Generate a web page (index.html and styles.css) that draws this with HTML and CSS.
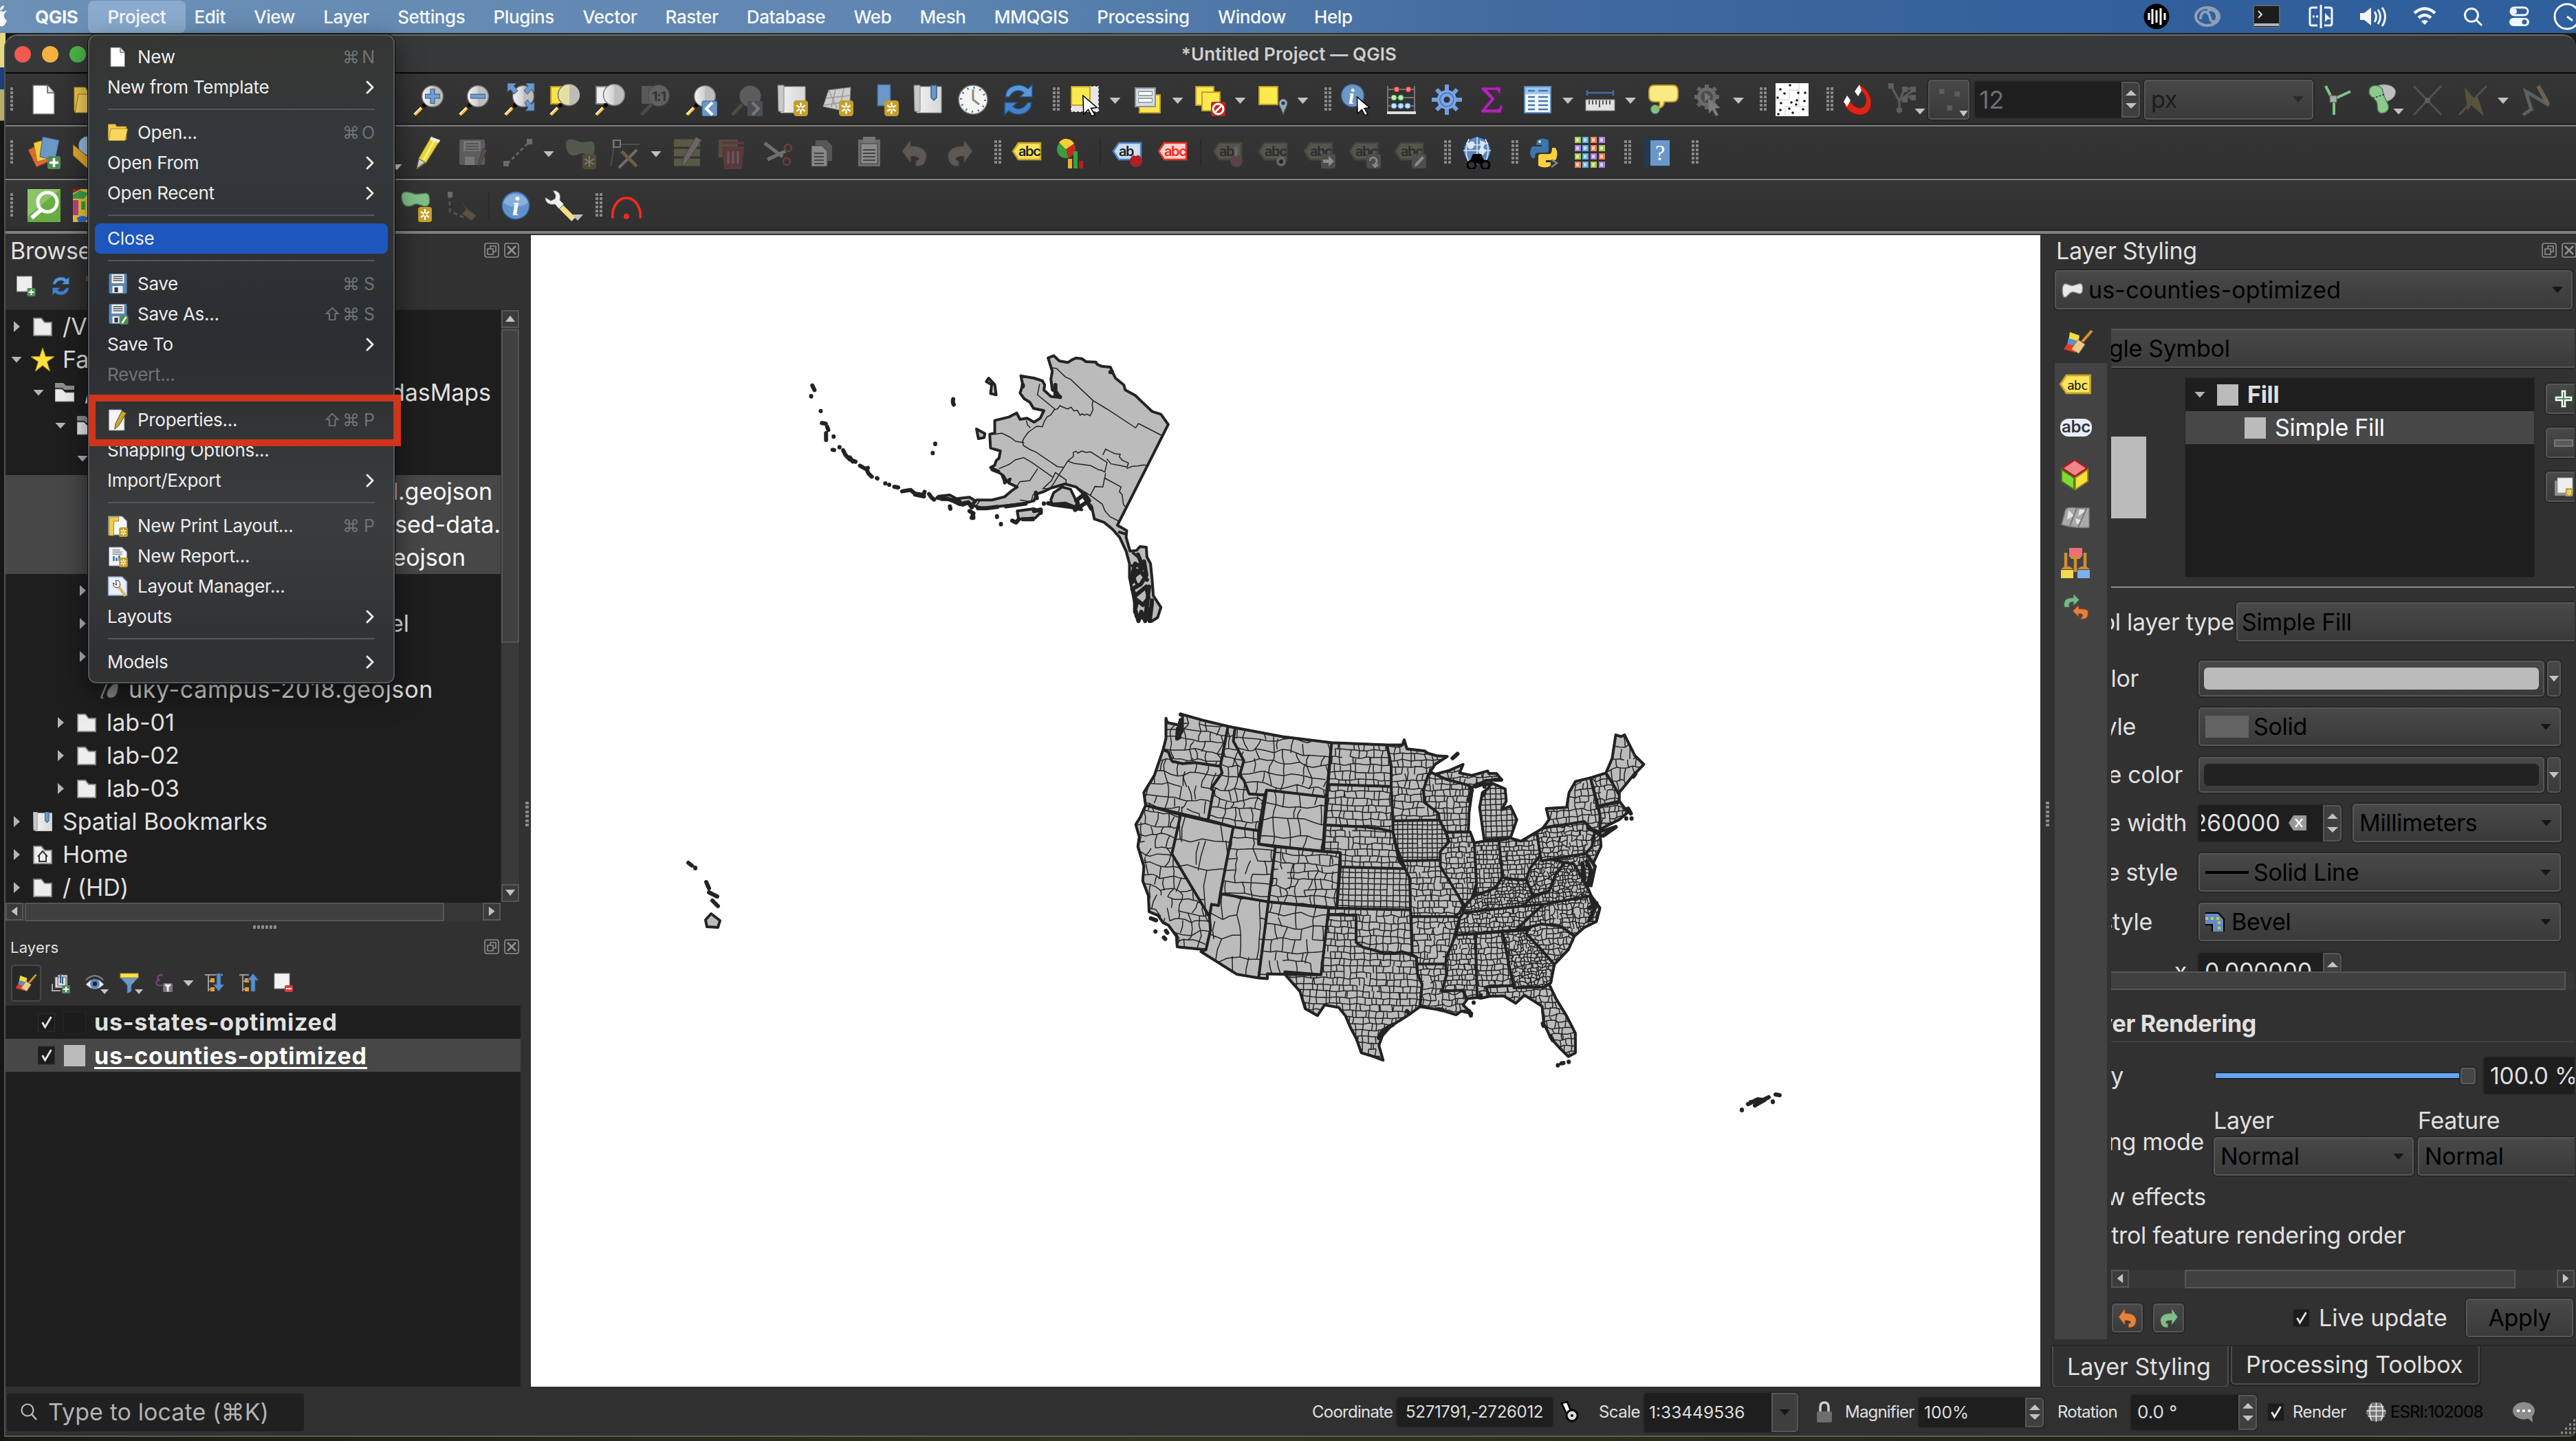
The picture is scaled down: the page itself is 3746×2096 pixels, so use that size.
FILE: index.html
```html
<!DOCTYPE html>
<html lang="en">
<head>
<meta charset="utf-8">
<title>*Untitled Project — QGIS</title>
<link rel="stylesheet" href="styles.css">
</head>
<body>
<svg class="defs" aria-hidden="true">
<defs>
<linearGradient id="gLens" x1="0" x2="1"><stop offset="0" stop-color="#f4f4f4"/><stop offset=".5" stop-color="#cfcfcf"/><stop offset=".5" stop-color="#bdbdbd"/></linearGradient>
<linearGradient id="gPage" x1="0" x2="1"><stop offset="0" stop-color="#f2f2f2"/><stop offset="1" stop-color="#d6d6d6"/></linearGradient>
<symbol id="star" viewBox="0 0 20 22"><rect x="0" y="0" width="20" height="22" rx="4" fill="#c4a02b"/><path d="M10 3v16M4 7l12 8M16 7L4 15" stroke="#fff" stroke-width="2.2"/><circle cx="10" cy="11" r="2" fill="#c4a02b"/></symbol>
<symbol id="handleMag" viewBox="0 0 48 48"><path d="M19 31L4 46" stroke="#3a2c12" stroke-width="6"/><path d="M14 36L4 46" stroke="#fbc64a" stroke-width="4.5"/><path d="M13 35L3 45" stroke="#fff" stroke-width="1.5"/><circle cx="18" cy="32" r="3" fill="#000"/></symbol>
<symbol id="mag" viewBox="0 0 48 48"><use href="#handleMag"/><circle cx="30" cy="19" r="15.5" fill="url(#gLens)" stroke="#6e6e6e" stroke-width="1.5"/></symbol>
<symbol id="zin" viewBox="0 0 48 48"><use href="#mag"/><path d="M30 8v22M19 19h22" stroke="#3d6288" stroke-width="7"/><path d="M30 9v20M20 19h20" stroke="#6f9fd4" stroke-width="4.5"/></symbol>
<symbol id="zout" viewBox="0 0 48 48"><use href="#mag"/><path d="M19 19h22" stroke="#3d6288" stroke-width="7"/><path d="M20 19h20" stroke="#6f9fd4" stroke-width="4.5"/></symbol>
<symbol id="zfull" viewBox="0 0 48 48"><use href="#mag"/><path d="M7 0h13l-4 4 6 7-5 5-6-7-4 4zM46 0v13l-4-4-6 7-5-5 6-7-4-4zM46 40H33l4-4-5-7 4-5 6 7 4-4z" fill="#6b98c9" stroke="#355f8c"/></symbol>
<symbol id="zsel" viewBox="0 0 48 48"><rect x="4" y="5" width="28" height="25" fill="#f9e14a" stroke="#b99a28" stroke-width="2"/><use href="#handleMag"/><circle cx="30" cy="17" r="15.5" fill="#e6dfa4" stroke="#777" stroke-width="1.5"/><path d="M31 2a15 15 0 0 1 0 30z" fill="#bdbdb6"/></symbol>
<symbol id="zlay" viewBox="0 0 48 48"><rect x="4" y="5" width="28" height="25" fill="#eee" stroke="#888" stroke-width="2"/><use href="#handleMag"/><circle cx="30" cy="17" r="15.5" fill="url(#gLens)" stroke="#777" stroke-width="1.5"/></symbol>
<symbol id="znat" viewBox="0 0 48 48"><rect x="4" y="4" width="22" height="26" fill="#585858"/><path d="M18 31L4 46" stroke="#4e4b45" stroke-width="5"/><circle cx="29" cy="18" r="15.5" fill="#606060" stroke="#484848"/><text x="29" y="26" class="g11">1:1</text></symbol>
<symbol id="zlast" viewBox="0 0 48 48"><use href="#mag"/><rect x="26" y="26" width="22" height="22" rx="2" fill="#6b98c9" stroke="#355f8c"/><path d="M41 28l-9 9 9 9" fill="none" stroke="#fff" stroke-width="4"/></symbol>
<symbol id="znext" viewBox="0 0 48 48"><path d="M18 31L4 46" stroke="#4e4b45" stroke-width="5"/><circle cx="30" cy="19" r="15.5" fill="#5c5c5c"/><rect x="26" y="26" width="22" height="22" rx="2" fill="#4a4f54"/><path d="M33 28l9 9-9 9" fill="none" stroke="#777" stroke-width="4"/></symbol>
<symbol id="map" viewBox="0 0 48 48"><path d="M10 5h34v38H8z" fill="url(#gPage)" stroke="#999"/><path d="M4 3h9v38H5z" fill="#c9c9c9" stroke="#888"/></symbol>
<symbol id="mapnew" viewBox="0 0 48 48"><use href="#map"/><use href="#star" x="27" y="25" width="21" height="23"/></symbol>
<symbol id="mesh" viewBox="0 0 48 48"><path d="M12 10l32-4-2 36-38-8z" fill="#cdcdcd" stroke="#888"/><path d="M8 22l34-4M6 32l36-6M22 9l-6 26M34 8l-6 30M12 10l12 26" stroke="#999" stroke-width="1.5" fill="none"/></symbol>
<symbol id="meshnew" viewBox="0 0 48 48"><use href="#mesh"/><use href="#star" x="27" y="25" width="21" height="23"/></symbol>
<symbol id="bmnew" viewBox="0 0 48 48"><path d="M17 2h19v40l-9-9-10 0z" fill="#6b98c9" stroke="#355f8c" stroke-width="1.5"/><use href="#star" x="27" y="25" width="21" height="23"/></symbol>
<symbol id="bm" viewBox="0 0 48 48"><use href="#map"/><path d="M29 3h8v18l-4 4-4-4z" fill="#6b98c9" stroke="#355f8c" stroke-width="1.5"/></symbol>
<symbol id="clock" viewBox="0 0 48 48"><circle cx="24" cy="24" r="21" fill="#f4f4f2" stroke="#777" stroke-width="1.5"/><circle cx="24" cy="24" r="17.5" fill="none" stroke="#3d6ea8" stroke-width="3" stroke-dasharray="2 7.16"/><path d="M24 9v15l9 7" fill="none" stroke="#8b8b82" stroke-width="3"/></symbol>
<symbol id="refresh" viewBox="0 0 48 48"><path d="M5 20C6 2 28-2 38 8l6-6v18H26l6-6c-7-6-17-3-21 6z" fill="#5b97d9" stroke="#24508a" stroke-width="1.5"/><path d="M43 28c-1 18-23 22-33 12l-6 6V28h18l-6 6c7 6 17 3 21-6z" fill="#4582c8" stroke="#24508a" stroke-width="1.5"/></symbol>
<symbol id="cursor" viewBox="0 0 24 32"><path d="M1 1l21 18-9 1 6 10-5 2-5-10-7 7z" fill="#fff" stroke="#000" stroke-width="1.6"/></symbol>
<symbol id="select" viewBox="0 0 48 48"><rect x="3" y="4" width="41" height="38" fill="#e6e6e6"/><rect x="3" y="4" width="41" height="38" fill="none" stroke="#222" stroke-width="1.5" stroke-dasharray="3 3"/><rect x="4" y="5" width="27" height="27" fill="#fce94f" stroke="#c4a02b" stroke-width="2"/><use href="#cursor" x="19" y="17" width="25" height="31"/></symbol>
<symbol id="selform" viewBox="0 0 48 48"><rect x="12" y="17" width="30" height="26" fill="#fce94f" stroke="#c4a02b" stroke-width="2"/><rect x="6" y="7" width="29" height="27" fill="#d5dbe2" stroke="#8a939c" stroke-width="2"/><path d="M10 15h21M10 25h21" stroke="#8a939c" stroke-width="7"/><path d="M11 15h19M11 25h19" stroke="#fff" stroke-width="4"/></symbol>
<symbol id="desel" viewBox="0 0 48 48"><path d="M3 5h26v8h9v27H12v-8H3z" fill="#fce94f" stroke="#c4a02b" stroke-width="2"/><path d="M12 32V13h17" fill="none" stroke="#c4a02b" stroke-width="2"/><rect x="25" y="27" width="21" height="21" rx="3" fill="#c0271f"/><circle cx="35.500" cy="37.500" r="7.500" fill="none" stroke="#fff" stroke-width="3"/><path d="M30 43l11-11" stroke="#fff" stroke-width="3"/></symbol>
<symbol id="selloc" viewBox="0 0 48 48"><rect x="4" y="5" width="27" height="26" fill="#fce94f" stroke="#c4a02b" stroke-width="2"/><path d="M39 46c-2-9-6-12-6-17a6 6 0 0 1 12 0c0 5-4 8-6 17z" fill="#8fa9b8" stroke="#4b6472"/><circle cx="39" cy="29" r="2.600" fill="#333"/></symbol>
<symbol id="info" viewBox="0 0 48 48"><circle cx="24" cy="24" r="20" fill="#5f92cd" stroke="#2e5688" stroke-width="1.500"/><path d="M6 20a19 19 0 0 1 36 0c-12 8-24 8-36 0z" fill="#a5c3e5" opacity=".6"/><text x="24" y="38" class="gi">i</text></symbol>
<symbol id="ident" viewBox="0 0 48 48"><circle cx="19" cy="18" r="16.500" fill="#6b98c9" stroke="#355f8c" stroke-width="1.500"/><text x="17" y="30" class="gi2">i</text><use href="#cursor" x="23" y="19" width="24" height="28"/></symbol>
<symbol id="abacus" viewBox="0 0 48 48"><path d="M4 4v40M43 4v40M4 9h39M4 21h39M4 33h39" stroke="#777" stroke-width="2" fill="none"/><path d="M3 43h42" stroke="#ddd" stroke-width="4"/><g fill="#f08080" stroke="#b02020"><circle cx="17" cy="9" r="4"/><circle cx="34" cy="9" r="4"/></g><g fill="#b6f0b0" stroke="#4a9a4a"><circle cx="13" cy="21" r="4"/><circle cx="23" cy="21" r="4"/></g><g fill="#bfe3fb" stroke="#4a88b8"><circle cx="13" cy="33" r="4"/><circle cx="23" cy="33" r="4"/><circle cx="33" cy="33" r="4"/></g></symbol>
<symbol id="gear" viewBox="0 0 48 48"><g stroke="#6f9fe0" stroke-width="6"><path d="M24 2v44M2 24h44M9 9l30 30M39 9L9 39"/></g><circle cx="24" cy="24" r="14" fill="#7aa7e4"/><circle cx="24" cy="24" r="10" fill="none" stroke="#4f7fc4" stroke-width="2"/><circle cx="24" cy="24" r="4.500" fill="#333"/></symbol>
<symbol id="sigma" viewBox="0 0 48 48"><path d="M8 6h28v9h-3c0-4-2-5-6-5H17l11 13-13 15h14c5 0 6-2 7-6h3l-2 11H8v-3l14-17L8 9z" fill="#ae28b0" stroke="#701872"/></symbol>
<symbol id="table" viewBox="0 0 48 48"><rect x="5" y="5" width="38" height="38" fill="#f2f6fa" stroke="#5c8fc4" stroke-width="2"/><rect x="6" y="6" width="36" height="10" fill="#9cc6ee"/><path d="M10 11h10M25 11h14M10 20h10M25 20h14M10 26h10M25 26h14M10 32h10M25 32h14M10 38h10M25 38h14" stroke="#4479b0" stroke-width="2.500"/></symbol>
<symbol id="ruler" viewBox="0 0 48 48"><path d="M5 14h38M5 10v8M43 10v8" stroke="#3e6ea3" stroke-width="2.500"/><rect x="3" y="24" width="42" height="16" fill="#e2e2e2" stroke="#888"/><path d="M8 25v6M13 25v6M18 25v6M23 25v10M28 25v6M33 25v6M38 25v6" stroke="#555" stroke-width="2"/></symbol>
<symbol id="tip" viewBox="0 0 48 48"><circle cx="13" cy="38" r="6.500" fill="#7fbf86" stroke="#4a7a50"/><path d="M12 3h26q8 0 8 8v8q0 8-8 8H26q0 8-9 10 4-4 2-10h-7q-8 0-8-8v-8q0-8 8-8z" fill="#f9ea85" stroke="#c4a02b" stroke-width="2"/></symbol>
<symbol id="geargrey" viewBox="0 0 48 48"><g stroke="#666" stroke-width="6"><path d="M22 2v36M4 20h36M9 7l26 26M35 7L9 33"/></g><circle cx="22" cy="20" r="14" fill="#6a6a6a"/><circle cx="22" cy="20" r="9" fill="#4a4d50"/><path d="M19 14l9 6-9 6z" fill="#777"/><path d="M24 22l18 14-8 1 5 9-4 2-5-9-5 5z" fill="#7c7c7c"/></symbol>
<symbol id="dots" viewBox="0 0 48 48"><rect width="48" height="48" fill="#fff"/><path d="M0 24h20M20 24V10h14V0M14 48V34h20V10M34 34h14" fill="none" stroke="#ccc"/><g fill="#111"><circle cx="7" cy="9" r="1.800"/><circle cx="21" cy="3" r="1.800"/><circle cx="13" cy="15" r="1.800"/><circle cx="33" cy="14" r="1.800"/><circle cx="43" cy="14" r="1.800"/><circle cx="3" cy="21" r="1.800"/><circle cx="8" cy="29" r="1.800"/><circle cx="31" cy="25" r="1.800"/><circle cx="23" cy="28" r="1.800"/><circle cx="30" cy="31" r="1.800"/><circle cx="42" cy="26" r="1.800"/><circle cx="7" cy="39" r="1.800"/><circle cx="4" cy="45" r="1.800"/><circle cx="20" cy="37" r="1.800"/><circle cx="25" cy="43" r="1.800"/><circle cx="40" cy="38" r="1.800"/></g></symbol>
<symbol id="magnet" viewBox="0 0 48 48"><path d="M24 8C40 16 38 36 27 36 20 36 15 30 10 24L4 32C10 42 20 47 29 46 48 44 48 14 27 3z" fill="#dc2418" stroke="#8a120a"/><path d="M26 2l3 9-5 8-5-7zM8 18l5 7-5 9-5-7z" fill="#fff"/></symbol>
<symbol id="vert" viewBox="0 0 48 48"><path d="M6 4l12 22 8-18M18 44V26l20-16M26 8h14M26 20h14" fill="none" stroke="#5a5a5a" stroke-width="3.500"/><g fill="#5e5e5e"><rect x="2" y="0" width="8" height="8"/><rect x="22" y="5" width="8" height="8"/><rect x="34" y="5" width="8" height="8"/><rect x="34" y="17" width="8" height="8"/><rect x="22" y="20" width="8" height="8"/><rect x="14" y="36" width="8" height="6"/></g></symbol>
<symbol id="topo" viewBox="0 0 48 48"><path d="M18 24L8 4M18 24L44 12M20 24v22" stroke="#7fc487" stroke-width="4"/><rect x="14" y="18" width="10" height="10" fill="#aaa" stroke="#555"/></symbol>
<symbol id="avoid" viewBox="0 0 48 48"><path d="M14 6C22-2 48 2 43 16c-2 8-10 9-14 12L16 18z" fill="#bfbfbf" stroke="#777"/><path d="M6 8c4-7 18-6 19 4 1 8 6 14 8 20 2 9-6 13-12 11-6-3-2-10-5-16C13 20 2 20 6 8z" fill="#8cc98d" stroke="#4d7f50" stroke-width="1.500"/><path d="M10 22l18-6" stroke="#333" stroke-width="1.500" stroke-dasharray="3 2"/></symbol>
<symbol id="cross" viewBox="0 0 48 48"><path d="M4 4l40 42M44 4L4 46" stroke="#505050" stroke-width="3"/><circle cx="24" cy="25" r="4" fill="#5e5e5e"/></symbol>
<symbol id="bolt" viewBox="0 0 48 48"><path d="M12 6l14 16 4-6 10 32-18-16-6 8z" fill="#5c5238"/><path d="M44 4L4 46" stroke="#505050" stroke-width="3"/></symbol>
<symbol id="trace" viewBox="0 0 48 48"><path d="M6 46l12-8L10 12l34 20" fill="none" stroke="#5b6062" stroke-width="5"/><path d="M28 4l14 26" stroke="#6d6055" stroke-width="6"/></symbol>
<symbol id="file" viewBox="0 0 48 48"><path d="M8 3h21l10 11v31H8z" fill="#fff" stroke="#6a6a6a" stroke-width="1.500"/><path d="M29 3v11h10" fill="#ddd" stroke="#555" stroke-width="1.500"/></symbol>
<symbol id="open" viewBox="0 0 48 48"><path d="M2 6h16l3 5h22v30H2z" fill="#f2c94c" stroke="#b8912d"/><path d="M8 16h38l-6 27H3z" fill="#f9d65c" stroke="#8f6f1c"/></symbol>
<symbol id="layers" viewBox="0 0 48 48"><path d="M1 20l18-9 12 26-18 8z" fill="#dd6a32" stroke="#8b3d17"/><path d="M9 10l20-6 5 28-20 5z" fill="#f5cd3c" stroke="#a07c14"/><path d="M22 1l24 5-6 29-22-5z" fill="#6b98c9" stroke="#355f8c"/><rect x="29" y="29" width="19" height="19" rx="3" fill="#4f8d56"/><path d="M38.500 32v13M32 38.500h13" stroke="#fff" stroke-width="3.500"/></symbol>
<symbol id="box" viewBox="0 0 48 48"><circle cx="22" cy="14" r="14" fill="#9fc1e6" stroke="#355f8c"/><path d="M0 12l22 18v18L0 28z" fill="#e8aa30" stroke="#6e4c0c"/></symbol>
<symbol id="pencil" viewBox="0 0 48 48"><path d="M29 1l13 5-20 32-14 10 3-16z" fill="#e9d33a" stroke="#7c6c12"/><path d="M35 4L18 35" stroke="#fff27c" stroke-width="3"/><path d="M29 1l13 5-2 4-13-5z" fill="#eee"/><path d="M8 47l3-14 9 5z" fill="#ccc" stroke="#555"/></symbol>
<symbol id="savegr" viewBox="0 0 48 48"><rect x="4" y="5" width="37" height="37" rx="3" fill="#5c5c5e"/><rect x="10" y="7" width="25" height="15" fill="#757575"/><path d="M13 11h19M13 15h19M13 19h19" stroke="#4b4b4b" stroke-width="1.500"/><rect x="12" y="30" width="14" height="12" fill="#777"/><path d="M44 20l-12 26 0-8 6-20z" fill="#5b4d47" stroke="#403a38"/></symbol>
<symbol id="line" viewBox="0 0 48 48"><path d="M8 40L40 8" stroke="#636363" stroke-width="3" stroke-dasharray="5 4"/><rect x="2" y="36" width="8" height="8" fill="#6a6a6a"/><rect x="36" y="4" width="8" height="8" fill="#6a6a6a"/></symbol>
<symbol id="polygr" viewBox="0 0 48 48"><path d="M3 12C2 2 14 4 22 8s20-6 22 4 0 16-6 16-8-6-16-2S4 30 3 12z" fill="#51594f"/><rect x="27" y="26" width="20" height="22" rx="4" fill="#524c36"/><path d="M37 29v16M30 33l14 8M44 33l-14 8" stroke="#777" stroke-width="2"/></symbol>
<symbol id="tools" viewBox="0 0 48 48"><path d="M8 8L2 44M14 12h30" stroke="#4d4d4d" stroke-width="2"/><rect x="6" y="6" width="10" height="10" fill="none" stroke="#777" stroke-width="2"/><path d="M14 46l26-26" stroke="#6c6c6c" stroke-width="4"/><path d="M18 22l22 22" stroke="#6b5f40" stroke-width="5"/></symbol>
<symbol id="fields" viewBox="0 0 48 48"><path d="M4 10h38M4 24h38M4 38h38" stroke="#5a5847" stroke-width="11"/><path d="M36 1l8 5-20 30-8 8 2-12z" fill="#6b6565" stroke="#444"/></symbol>
<symbol id="trash" viewBox="0 0 48 48"><rect x="3" y="5" width="28" height="26" fill="#514f3c"/><path d="M8 10h32M10 17h28l-3 29H13z" fill="#59393c" stroke="#59393c" stroke-width="4"/><path d="M17 22v18M24 22v18M31 22v18" stroke="#6c5a5a" stroke-width="3"/></symbol>
<symbol id="cut" viewBox="0 0 48 48"><path d="M4 10l26 20M8 34l26-12" stroke="#6f6f6f" stroke-width="5"/><circle cx="38" cy="17" r="5" fill="none" stroke="#69403f" stroke-width="2.500"/><circle cx="36" cy="37" r="5" fill="none" stroke="#69403f" stroke-width="2.500"/></symbol>
<symbol id="copy" viewBox="0 0 48 48"><path d="M12 6h16l8 8v22H12z" fill="#575757"/><path d="M6 14h15l8 8v22H6z" fill="#888" stroke="#444"/><path d="M10 25h14M10 30h14M10 35h14M10 40h14" stroke="#444" stroke-width="2"/></symbol>
<symbol id="paste" viewBox="0 0 48 48"><rect x="8" y="5" width="32" height="39" fill="#6c6c6c"/><rect x="15" y="1" width="18" height="9" fill="#777"/><rect x="12" y="11" width="24" height="29" fill="#8b8b8b" stroke="#444"/><path d="M15 20h18M15 25h18M15 30h18M15 35h18" stroke="#444" stroke-width="2"/></symbol>
<symbol id="undo" viewBox="0 0 48 48"><path d="M6 22L18 6v9c18-1 26 8 22 20-2 7-8 9-14 8v-7c6 0 8-8-8-7v9z" fill="var(--a)" stroke="var(--b)"/></symbol>
<symbol id="tag" viewBox="0 0 48 48"><path d="M3 22L11 10h32v24H11z" fill="var(--a)" stroke="var(--b)" stroke-width="2.500"/></symbol>
<symbol id="pie" viewBox="0 0 48 48"><circle cx="14" cy="19" r="13" fill="#39a03c"/><path d="M14 19L4 9a13 13 0 0 1 22 2z" fill="#f7cf35"/><path d="M14 19l12-8a13 13 0 0 1-9 20z" fill="#c22a25"/><rect x="17" y="33" width="6" height="14" fill="#f0b030"/><rect x="25" y="22" width="6" height="25" fill="#37a33a"/><rect x="33" y="36" width="6" height="11" fill="#b02020"/></symbol>
<symbol id="globe" viewBox="0 0 48 48"><circle cx="24" cy="21" r="20" fill="#5f87b8" stroke="#1c3a60" stroke-width="2"/><path d="M10 12c6-8 12-4 10 2s-8 6-10 2zM28 6l8 3-3 8 5 4-7 8-5-6 3-7z" fill="#d6e5f5"/><path d="M4 21h40M24 1v40M8 10q16 6 32 0M12 4q-8 17 0 34M36 4q8 17 0 34" fill="none" stroke="#dbe8f6" stroke-width="1.500"/><path d="M12 40l6-14h12l6 14z" fill="#000"/><circle cx="16" cy="42" r="6" fill="#333" stroke="#000" stroke-width="3"/><circle cx="36" cy="42" r="6" fill="#333" stroke="#000" stroke-width="3"/></symbol>
<symbol id="python" viewBox="0 0 48 48"><path d="M13 6q8-5 17 0v14q0 4-4 4H14q-4 0-4 8H6q-6-8 0-17h14v-2h-8z" fill="#3c76aa"/><path d="M33 43q-8 5-18 0V30q0-4 4-4h12q4 0 4-9h5q5 9 0 18H26v3h7z" fill="#fccf3c"/><circle cx="17" cy="8" r="1.800" fill="#fff"/><path d="M34 34l8 5-8 6" fill="none" stroke="#888" stroke-width="2.500"/></symbol>
<symbol id="grid9" viewBox="0 0 48 48"><path d="M2 1h9v9H2zM37 13h9v9h-9zM2 25h9v9H2zM25 37h9v9h-9z" fill="#a9c94a"/><path d="M13 1h9v9h-9zM13 13h9v9h-9zM13 25h9v9h-9zM13 37h9v9h-9z" fill="#5fb0ea"/><path d="M25 1h9v9h-9zM25 13h9v9h-9zM37 25h9v9h-9zM2 37h9v9H2z" fill="#ef8250"/><path d="M37 1h9v9h-9zM2 13h9v9H2zM25 25h9v9h-9zM37 37h9v9h-9z" fill="#a882e2"/><path fill="#fff" opacity=".6" d="M4 3h4v5H4zM15 3h4v5h-4zM27 3h4v5h-4zM39 3h4v5h-4zM4 15h4v5H4zM15 15h4v5h-4zM27 15h4v5h-4zM39 15h4v5h-4zM4 27h4v5H4zM15 27h4v5h-4zM27 27h4v5h-4zM39 27h4v5h-4zM4 39h4v5H4zM15 39h4v5h-4zM27 39h4v5h-4zM39 39h4v5h-4z"/></symbol>
<symbol id="help" viewBox="0 0 48 48"><rect x="4" y="3" width="39" height="42" fill="#24384e"/><rect x="14" y="6" width="28" height="37" fill="#6b98c9"/><text x="28" y="35" class="gq">?</text></symbol>
<symbol id="gsearch" viewBox="0 0 48 48"><rect width="48" height="48" fill="#68ad43"/><path d="M0 0h48L0 40z" fill="#8cc46a"/><circle cx="29" cy="19" r="14" fill="none" stroke="#fff" stroke-width="5"/><path d="M20 30L6 42" stroke="#fff" stroke-width="6"/></symbol>
<symbol id="osm" viewBox="0 0 48 48"><rect width="48" height="48" fill="#f0c840"/><path d="M0 8l10-6 12 4-6 8H0z" fill="#3da648"/><path d="M0 16h8v22H0z" fill="#c3457f"/><path d="M12 18h6v12h-6z" fill="#3da648"/><path d="M6 42q8-6 16 0l-4 6H8z" fill="#2f6fd0"/><path d="M0 0h12L0 6z" fill="#b02020"/></symbol>
<symbol id="poly" viewBox="0 0 48 48"><path d="M2 12C1 1 12 4 20 7s20-6 22 4-1 14-6 14-10-6-17-2S3 26 2 12z" fill="#84be88" stroke="#4e7f52" stroke-width="1.500"/><use href="#star" x="25" y="26" width="22" height="22"/></symbol>
<symbol id="brushgr" viewBox="0 0 48 48"><path d="M6 8v24l22 10" fill="none" stroke="#555" stroke-width="3" stroke-dasharray="6 4"/><rect x="3" y="4" width="7" height="8" fill="#6a6a6a"/><path d="M22 16l8 14-6 6 14 10 6-8-14-10z" fill="#5a4f42"/></symbol>
<symbol id="wrench" viewBox="0 0 48 48"><path d="M22 24l20 20" stroke="#f3dd85" stroke-width="8"/><path d="M12 2c10 0 12 8 10 14l6 6-7 7-6-7C8 24 0 20 1 12l8 5 6-3 1-5z" fill="#efefef" stroke="#666"/></symbol>
<symbol id="arc" viewBox="0 0 52 52"><path d="M4 46v-4a22 28 0 0 1 44 0v4" fill="none" stroke="#f42a1e" stroke-width="4"/><circle cx="26" cy="43" r="4.500" fill="#f42a1e"/></symbol>
<symbol id="folder" viewBox="0 0 28 28"><path d="M1 2h11l5 6h10v19H1z" fill="#ededed" stroke="#8c8c8c" stroke-width="1.800"/></symbol>
<symbol id="folder2" viewBox="0 0 28 28"><path d="M0 0h12l4 4h12v6H14l-4-3H0z" fill="#8d8f8c"/><path d="M0 9h10l5 5h13v13H0z" fill="#ededed" stroke="#8c8c8c"/></symbol>
<symbol id="home" viewBox="0 0 28 28"><use href="#folder"/><path d="M7 17l7-8 7 8M9 15v9h10v-9" fill="none" stroke="#333" stroke-width="2"/></symbol>
<symbol id="fav" viewBox="0 0 32 32"><path d="M16 0l4 12h12l-10 7 4 13-10-8-10 8 4-13L0 12h12z" fill="#fbe23f" stroke="#b99522"/></symbol>
<symbol id="leaf" viewBox="0 0 28 28"><path d="M3 26L12 4M2 5h5M3 26h3" stroke="#888" stroke-width="2.500"/><path d="M27 2c2 14-2 24-10 24S8 14 27 2z" fill="#8f8f8f" stroke="#555"/></symbol>
<symbol id="pageplus" viewBox="0 0 28 30"><rect x="1" y="1" width="22" height="22" fill="#eee" stroke="#999"/><rect x="16" y="18" width="12" height="12" rx="2" fill="#4f8d56"/><path d="M22 20v8M18 24h8" stroke="#fff" stroke-width="2"/></symbol>
<symbol id="pageminus" viewBox="0 0 28 30"><rect x="1" y="1" width="22" height="22" fill="#f3f3f3" stroke="#999"/><rect x="16" y="18" width="12" height="10" rx="2" fill="#d9393f"/><path d="M18 23h8" stroke="#fff" stroke-width="2"/></symbol>
<symbol id="float" viewBox="0 0 22 22"><rect x="1" y="1" width="20" height="20" rx="3" fill="none" stroke="#8f8f8f" stroke-width="1.600"/><path d="M5 9h8v8H5zM9 9V5h8v8h-4" fill="none" stroke="#8f8f8f" stroke-width="1.600"/></symbol>
<symbol id="close" viewBox="0 0 22 22"><rect x="1" y="1" width="20" height="20" rx="3" fill="none" stroke="#8f8f8f" stroke-width="1.600"/><path d="M5 5l12 12M17 5L5 17" stroke="#8f8f8f" stroke-width="2.600"/></symbol>
<symbol id="brush" viewBox="0 0 44 36"><path d="M10 3l14 5-4 22-14-4z" fill="#f3dd3d"/><path d="M8 12l14 4-1 8-15-4z" fill="#5c8fd0"/><path d="M6 20l16 4-4 9L1 28z" fill="#e03a2c"/><path d="M22 14l10 7-9 13-11-6z" fill="#ecc88e" stroke="#a8793a"/><path d="M28 17L42 1" stroke="#d6922f" stroke-width="4"/></symbol>
<symbol id="dup" viewBox="0 0 28 30"><path d="M2 16v10h12" fill="none" stroke="#aaa" stroke-width="2"/><path d="M6 6h16v16H6zM10 3h14v16H10z" fill="#ddd" stroke="#555"/><path d="M14 1v14M17 6v10" stroke="#355f8c" stroke-width="2"/><rect x="16" y="18" width="12" height="12" rx="2" fill="#4f8d56"/><path d="M22 20v8M18 24h8" stroke="#fff" stroke-width="2"/></symbol>
<symbol id="eye" viewBox="0 0 30 28"><path d="M1 16Q15 0 29 16 15 30 1 16z" fill="#eef2f6" stroke="#888"/><circle cx="15" cy="15" r="7.500" fill="#5b87bd"/><circle cx="15" cy="15" r="3.500" fill="#16283e"/><path d="M1 9Q15-4 28 9" fill="none" stroke="#888" stroke-width="2"/></symbol>
<symbol id="funnel" viewBox="0 0 28 30"><path d="M1 7h26L17 18v9l-6 3V18z" fill="#6b98c9" stroke="#355f8c"/><rect x="1" y="1" width="26" height="6" fill="#f9e14a" stroke="#c4a02b"/></symbol>
<symbol id="eps" viewBox="0 0 30 30"><path d="M14 3C6 0 2 8 9 10c-8 1-8 11 4 8" fill="none" stroke="#7a3f84" stroke-width="2.500"/><rect x="14" y="15" width="15" height="14" rx="2" fill="#777"/><path d="M16 17h11l-4 5v6h-3v-6z" fill="#eee"/></symbol>
<symbol id="expand" viewBox="0 0 28 28"><path d="M0 2h26M5 2v24M5 11h5M5 23h5" stroke="#9a9a9a" stroke-width="2" fill="none"/><rect x="8" y="7" width="6" height="6" fill="#f39a2b"/><rect x="8" y="20" width="6" height="6" fill="#f39a2b"/><path d="M17 0h6v16h5l-8 10-8-10h5z" fill="#5c8fc8" stroke="#2d5a90"/></symbol>
<symbol id="collapse" viewBox="0 0 28 28"><path d="M0 2h14M5 2v24M5 11h5M5 23h5" stroke="#9a9a9a" stroke-width="2" fill="none"/><rect x="8" y="7" width="6" height="6" fill="#f39a2b"/><rect x="8" y="20" width="6" height="6" fill="#f39a2b"/><path d="M17 26h6V10h5L20 0l-8 10h5z" fill="#5c8fc8" stroke="#2d5a90"/></symbol>
<symbol id="cube" viewBox="0 0 42 46"><path d="M21 2l18 12-18 12L3 14z" fill="#f08488" stroke="#a81c1c" stroke-width="2.500"/><path d="M2 16l18 12v17L2 33z" fill="#86d830" stroke="#3f7d1c" stroke-width="2"/><path d="M40 16L22 28v17l18-12z" fill="#f8e03c" stroke="#a0881c" stroke-width="2"/></symbol>
<symbol id="mesh2" viewBox="0 0 44 32"><path d="M8 4q4-4 16-2l18 0v28q-20 2-40-4z" fill="#a9a9a9" stroke="#7d7d7d" stroke-width="1.500"/><path d="M12 5l8 8-10 6zM28 4l10 1-12 9zM22 17l10 3-8 6z" fill="#e4e4e4"/><path d="M24 2l-10 26M38 3L26 30" stroke="#777" stroke-width="2"/></symbol>
<symbol id="brushes" viewBox="0 0 44 46"><path d="M8 8v22M36 8v22M22 14v22" stroke="#cf8f34" stroke-width="4.500"/><path d="M12 12h20l-4 5H16zM1 32l5-4h8l5 4zM25 32l5-4h8l5 4z" fill="#cf8f34"/><rect x="13" y="1" width="19" height="12" fill="#ee6e74"/><rect x="1" y="33" width="18" height="12" fill="#f4da4c"/><rect x="25" y="33" width="18" height="12" fill="#7db0ea"/></symbol>
<symbol id="hist" viewBox="0 0 40 40"><path d="M2 20C0 6 10 6 16 6V0l9 9-9 9v-6c-6 0-8 2-6 8z" fill="#7ab782" stroke="#42714a"/><path d="M38 26c2 14-8 12-12 12 6-4 6-8-2-8v5l-9-9 9-9v6c8 0 12 0 14 3z" fill="#e8803e" stroke="#9a4a18"/></symbol>
<symbol id="polyw" viewBox="0 0 34 24"><path d="M3 4c3-5 8 2 14 1s12-5 14-2 2 12-1 14-9-3-14-2-7 8-11 8S0 8 3 4z" fill="#e9e9e9" stroke="#8a8a8a" stroke-width="1.500"/></symbol>
<symbol id="bevel" viewBox="0 0 28 28"><path d="M0 0h19l8 9v19H10V18H0z" fill="#5f8ec6"/><path d="M0 1h19l8 9v18M0 18h10v10" fill="none" stroke="#000" stroke-width="2"/><path d="M0 9h20v19" fill="none" stroke="#d8c038" stroke-width="4" stroke-dasharray="4 4"/></symbol>
<symbol id="disk" viewBox="0 0 30 32"><rect x="2" y="1" width="26" height="29" rx="2" fill="#5c86b5"/><rect x="6" y="2" width="18" height="13" fill="#f2f2f2"/><path d="M8 5h14M8 8h14M8 11h14" stroke="#555" stroke-width="1.500"/><rect x="7" y="19" width="15" height="10" fill="#eee"/><rect x="10" y="21" width="5" height="7" fill="#333"/></symbol>
<symbol id="prop" viewBox="0 0 30 34"><path d="M1 1h19l5 6v26H1z" fill="#f4f4f4" stroke="#888"/><path d="M21 3l7 3-12 20-6 5 1-8z" fill="#c9a832" stroke="#4d4012"/></symbol>
<symbol id="layoutp" viewBox="0 0 30 32"><path d="M1 2h20l7 7v20H1z" fill="#f6f6f6" stroke="#8a97b8"/><path d="M2 3h14v6H9v21H2z" fill="#f0cc4c" stroke="#a98a20"/><use href="#star" x="16" y="18" width="14" height="14"/></symbol>
<symbol id="report" viewBox="0 0 30 32"><path d="M2 3h19l7 7v20H2z" fill="#f2f4fa" stroke="#8a97b8"/><path d="M7 7h11M7 10h14M7 13h14" stroke="#888" stroke-width="1.500"/><path d="M9 16v7M13 18v5M17 15v8" stroke="#3d6ea8" stroke-width="2.500"/><use href="#star" x="16" y="18" width="14" height="14"/></symbol>
<symbol id="layman" viewBox="0 0 30 32"><path d="M1 2h20l7 7v20H1z" fill="#e8eefa" stroke="#8aa0c8" stroke-width="1.500"/><path d="M16 16l10 14" stroke="#d8b95c" stroke-width="4"/><path d="M12 7q7 0 6 8l-3 3q-7 0-7-7l5 3z" fill="#fff" stroke="#333"/></symbol>
<symbol id="chev" viewBox="0 0 14 20"><path d="M3 2l8 8-8 8" fill="none" stroke="#e8e8e8" stroke-width="3" stroke-linecap="round" stroke-linejoin="round"/></symbol>
<symbol id="check" viewBox="0 0 26 28"><rect x="1" y="1" width="24" height="26" fill="#1c1c1c" stroke="#2e2e2e"/><path d="M7 14l4 7 9-15" fill="none" stroke="#e4e4e4" stroke-width="2.800"/></symbol>
</defs>
</svg>

<header class="menubar">
  <svg class="apple" viewBox="0 0 24 32"><path d="M-8 20C-10 8-2 6 4 9c4 0 4-3 6-1-6 4-5 11 0 14-2 6-6 10-9 8-5-1-8-2-9-10zM0 7c0-4 2-7 6-7 0 4-3 7-6 7z" fill="#f4f8fb"/></svg>
  <b class="m-qgis">QGIS</b><span class="on">Project</span><span>Edit</span><span>View</span><span>Layer</span><span>Settings</span><span>Plugins</span><span>Vector</span><span>Raster</span><span>Database</span><span>Web</span><span>Mesh</span><span>MMQGIS</span><span>Processing</span><span>Window</span><span>Help</span>
  <svg class="status-icons" viewBox="3100 0 646 48">
    <circle cx="3136" cy="24" r="18.500" fill="#000"/><path d="M3125 19v10M3130 13v22M3136 15v18M3142 12v24M3148 19v10" stroke="#fff" stroke-width="3"/>
    <g fill="none" stroke="#8fa0b3" stroke-width="4"><ellipse cx="3210" cy="24" rx="17" ry="13"/><path d="M3200 28c0-14 12-14 14-2 1 8 10 8 10-2 0-8-8-12-14-8"/></g>
    <rect x="3277" y="8" width="38" height="32" fill="#1c1c1c" stroke="#61656c" stroke-width="2"/><path d="M3284 16l5 5-5 5" fill="none" stroke="#ddd" stroke-width="2"/><path d="M3278 36h36" stroke="#a9b4c6" stroke-width="4"/>
    <g fill="none" stroke="#f2f6fb" stroke-width="3"><path d="M3370 11h-8q-3 0-3 3v20q0 3 3 3h8M3380 11h8q3 0 3 3v20q0 3-3 3h-8M3375 7v34"/><path d="M3363 24h8" stroke-dasharray="3 2"/><path d="M3453 17q5 7 0 15M3458 14q7 10 0 21M3464 11q9 13 0 27"/><circle cx="3594" cy="22" r="9.500"/><path d="M3601 29l8 8"/><circle cx="3733" cy="24" r="18"/><path d="M3733 24l8 6"/></g>
    <path d="M3381 19l9 9h-5l-4 4zM3432 19h6l10-8v26l-10-8h-6z" fill="#f2f6fb"/>
    <g fill="none" stroke="#f2f6fb" stroke-width="4.500"><path d="M3511 19q15-13 30 0M3517 26q9-8 18 0"/></g><path d="M3526 36l-5-5q5-4 10 0z" fill="#f2f6fb"/>
    <rect x="3651" y="11" width="25" height="11" rx="5.500" fill="none" stroke="#f2f6fb" stroke-width="3"/><circle cx="3656" cy="16.500" r="4" fill="#f2f6fb"/><rect x="3649" y="26" width="29" height="12" rx="6" fill="#f2f6fb"/><circle cx="3671" cy="32" r="3.500" fill="#33629c"/>
  </svg>
</header>

<main class="window">
  <div class="titlebar"><i class="red"></i><i class="amber"></i><i class="green"></i><b>*Untitled Project — QGIS</b></div>

  <div class="tb tb1">
    <u class="h"></u><svg class="ic"><use href="#file"/></svg><svg class="ic"><use href="#open"/></svg><em class="under"></em>
    <svg class="ic"><use href="#zin"/></svg><svg class="ic"><use href="#zout"/></svg><svg class="ic"><use href="#zfull"/></svg><svg class="ic"><use href="#zsel"/></svg><svg class="ic"><use href="#zlay"/></svg><svg class="ic"><use href="#znat"/></svg><svg class="ic"><use href="#zlast"/></svg><svg class="ic"><use href="#znext"/></svg><svg class="ic"><use href="#mapnew"/></svg><svg class="ic"><use href="#meshnew"/></svg><svg class="ic"><use href="#bmnew"/></svg><svg class="ic"><use href="#bm"/></svg><svg class="ic"><use href="#clock"/></svg><svg class="ic"><use href="#refresh"/></svg>
    <u class="h"></u><svg class="ic"><use href="#select"/></svg><s></s><svg class="ic"><use href="#selform"/></svg><s></s><svg class="ic"><use href="#desel"/></svg><s></s><svg class="ic"><use href="#selloc"/></svg><s></s>
    <u class="h"></u><svg class="ic"><use href="#ident"/></svg><svg class="ic"><use href="#abacus"/></svg><svg class="ic"><use href="#gear"/></svg><svg class="ic"><use href="#sigma"/></svg><svg class="ic"><use href="#table"/></svg><s></s><svg class="ic"><use href="#ruler"/></svg><s></s><svg class="ic"><use href="#tip"/></svg><svg class="ic"><use href="#geargrey"/></svg><s></s>
    <u class="h"></u><svg class="ic"><use href="#dots"/></svg><u class="h"></u><svg class="ic"><use href="#magnet"/></svg><span class="withdn"><svg class="ic"><use href="#vert"/></svg><s></s></span>
    <span class="btn snapbtn"><svg viewBox="0 0 60 58"><path d="M15 12h8v8h-8zM39 16h8v8h-8zM27 38h8v8h-8z" fill="#5e5e5e"/></svg><s></s></span>
    <span class="spin snapspin"><span>12</span><em class="updn"></em></span>
    <span class="btn snapunit"><span>px</span><s></s></span>
    <svg class="ic"><use href="#topo"/></svg><span class="withdn"><svg class="ic"><use href="#avoid"/></svg><s></s></span><svg class="ic"><use href="#cross"/></svg><svg class="ic"><use href="#bolt"/></svg><s></s><svg class="ic"><use href="#trace"/></svg>
  </div>

  <div class="tb tb2">
    <u class="h"></u><svg class="ic"><use href="#layers"/></svg><svg class="ic"><use href="#box"/></svg><em class="under"><s></s></em>
    <svg class="ic"><use href="#pencil"/></svg><svg class="ic"><use href="#savegr"/></svg><svg class="ic"><use href="#line"/></svg><s></s><svg class="ic"><use href="#polygr"/></svg><svg class="ic"><use href="#tools"/></svg><s></s><svg class="ic"><use href="#fields"/></svg><svg class="ic"><use href="#trash"/></svg><svg class="ic"><use href="#cut"/></svg><svg class="ic"><use href="#copy"/></svg><svg class="ic"><use href="#paste"/></svg><svg class="ic greyish"><use href="#undo"/></svg><svg class="ic greyish flip"><use href="#undo"/></svg>
    <u class="h"></u>
    <span class="tagic yellow"><svg><use href="#tag"/></svg><b>abc</b></span><svg class="ic"><use href="#pie"/></svg><i class="vs"></i>
    <span class="tagic blue"><svg><use href="#tag"/></svg><b>ab</b><i class="pin"></i></span><span class="tagic redt"><svg><use href="#tag"/></svg><b>abc</b></span><i class="vs"></i>
    <span class="tagic dim"><svg><use href="#tag"/></svg><b>ab</b><i class="pin"></i></span><span class="tagic dim"><svg><use href="#tag"/></svg><b>abc</b><i class="dot"></i></span><span class="tagic dim"><svg><use href="#tag"/></svg><b>abc</b><svg class="sq" viewBox="0 0 21 21"><path d="M3 8h8V3l8 7.500-8 7.500v-5H3z" fill="#8a8a8a"/></svg></span><span class="tagic dim"><svg><use href="#tag"/></svg><b>abc</b><svg class="sq" viewBox="0 0 21 21"><path d="M5 10a5 5 0 1 1 8 4v5M9 15l4 4 4-4" fill="none" stroke="#8a8a8a" stroke-width="2.500"/></svg></span><span class="tagic dim"><svg><use href="#tag"/></svg><b>abc</b><svg class="sq" viewBox="0 0 21 21"><path d="M15 3l3 3L8 17l-4 1 1-4z" fill="#8a8a8a"/></svg></span>
    <u class="h"></u><svg class="ic"><use href="#globe"/></svg><u class="h"></u><svg class="ic"><use href="#python"/></svg><svg class="ic"><use href="#grid9"/></svg><u class="h"></u><svg class="ic"><use href="#help"/></svg><u class="h"></u>
  </div>

  <div class="tb tb3">
    <u class="h"></u><svg class="ic"><use href="#gsearch"/></svg><svg class="ic"><use href="#osm"/></svg><em class="under"></em>
    <svg class="ic"><use href="#poly"/></svg><svg class="ic"><use href="#brushgr"/></svg><i class="vs"></i><svg class="ic"><use href="#info"/></svg><span class="withdn"><svg class="ic"><use href="#wrench"/></svg><s></s></span><u class="h h3"></u><svg class="ic arc"><use href="#arc"/></svg>
  </div>

  <div class="body">
    <section class="left">
      <div class="dockhead big"><span>Browser</span><svg><use href="#float"/></svg><svg><use href="#close"/></svg></div>
      <div class="browsertools"><svg><use href="#pageplus"/></svg><svg><use href="#refresh"/></svg><svg><use href="#funnel"/></svg></div>
      <div class="treewrap">
        <div class="tree">
          <div class="row l0"><i class="r"></i><svg><use href="#folder"/></svg><span>/V</span></div>
          <div class="row l0"><i class="d"></i><svg class="st2"><use href="#fav"/></svg><span>Fav</span></div>
          <div class="row l1"><i class="d"></i><svg><use href="#folder2"/></svg><span>/</span><span class="tail t1">dasMaps</span></div>
          <div class="row l2"><i class="d"></i><svg><use href="#folder2"/></svg></div>
          <div class="row l3"><i class="d"></i></div>
          <div class="row sel l3"><span class="tail t2">d.geojson</span></div>
          <div class="row sel l3"><span class="tail t3">sed-data.</span></div>
          <div class="row sel l3"><span class="tail t4">geojson</span></div>
          <div class="row l3"><i class="r"></i></div>
          <div class="row l3"><i class="r"></i><span class="tail t5">el</span></div>
          <div class="row l3"><i class="r"></i></div>
          <div class="row l3 uky"><i></i><svg><use href="#leaf"/></svg><span>uky-campus-2018.geojson</span></div>
          <div class="row l2"><i class="r"></i><svg><use href="#folder"/></svg><span>lab-01</span></div>
          <div class="row l2"><i class="r"></i><svg><use href="#folder"/></svg><span>lab-02</span></div>
          <div class="row l2"><i class="r"></i><svg><use href="#folder"/></svg><span>lab-03</span></div>
          <div class="row l0"><i class="r"></i><svg viewBox="4 3 40 40"><use href="#bm" width="48" height="48"/></svg><span>Spatial Bookmarks</span></div>
          <div class="row l0"><i class="r"></i><svg><use href="#home"/></svg><span>Home</span></div>
          <div class="row l0"><i class="r"></i><svg><use href="#folder"/></svg><span>/ (HD)</span></div>
        </div>
        <div class="vscroll"><i class="sb up"></i><i class="thumb"></i><i class="sb down"></i></div>
      </div>
      <div class="hscroll"><i class="sb lf"></i><i class="thumb"></i><i class="sb rt"></i></div>
      <div class="hsplit"></div>
      <div class="dockhead small"><span>Layers</span><svg><use href="#float"/></svg><svg><use href="#close"/></svg></div>
      <div class="layertools"><span class="active"><svg><use href="#brush"/></svg></span><svg><use href="#dup"/></svg><span class="lt"><svg><use href="#eye"/></svg><s></s></span><span class="lt"><svg><use href="#funnel"/></svg><s></s></span><svg><use href="#eps"/></svg><s class="wide"></s><svg><use href="#expand"/></svg><svg><use href="#collapse"/></svg><svg><use href="#pageminus"/></svg></div>
      <div class="layers">
        <div class="row"><svg class="ck"><use href="#check"/></svg><i class="sw none"></i><b>us-states-optimized</b></div>
        <div class="row sel"><svg class="ck"><use href="#check"/></svg><i class="sw"></i><b class="ul">us-counties-optimized</b></div>
      </div>
    </section>

    <svg class="map" viewBox="772 342 2195 1675">
      <g id="usa" transform="translate(1620 1010) scale(.5102 .35714)"></g>
      <g transform="translate(1120 480) scale(.4082 .3333)">
        <path class="st" d="M990 122L1010 112 1030 135 1060 142 1075 130 1090 122 1110 125 1125 138 1160 140 1165 150 1180 158 1212 162 1222 190 1230 210 1260 240 1265 262 1300 285 1330 320 1360 355 1392 368 1418 412 1237 852 1270 875 1268 905 1282 965 1305 962 1318 945 1340 948 1342 990 1355 1020 1360 1080 1365 1160 1392 1210 1380 1255 1358 1272 1340 1255 1320 1258 1303 1250 1298 1190 1290 1140 1280 1080 1280 1020 1268 965 1245 905 1220 870 1190 840 1155 825 1145 770 1125 745 1120 720 1090 685 1050 672 1000 690 975 705 950 715 940 745 900 758 850 765 800 772 760 780 720 765 735 742 790 742 835 728 862 700 880 685 850 668 855 650 835 668 830 635 812 620 785 600 800 590 805 570 815 560 820 528 785 515 782 455 800 450 800 395 850 380 878 362 890 390 915 385 940 402 962 385 975 352 938 342 925 315 905 300 890 275 900 240 893 200 940 210 970 222 978 240 975 262 1000 290 1035 295 1020 270 1005 262 1000 215 1005 180z"/>
        <path class="st" d="M770 225l8-15 22 28 5 45-20-6 4-38zM735 432l30 20-3 18-20 4zM1000 740l10-30 30-25 30 10 20 50 20 40-40-10-60-10-8-10zM880 790l60-10 25 15-20 25-60 6zM600 725l40-5 30 20-60 0zM670 735l40-5 20 15-10 15-40-5zM1240 880l25 10M1290 970l20 20M1285 1030l40-10M1295 1080l15 40"/>
        <path class="blob" d="M652 302q-3 12 2 24M150 242l8 20M146 288v2M180 353v1M184 406l14 3M203 422l4 14M199 450v30M226 464v2M222 523l6 1M247 511v1M260 525l8 20 16 20 20 10M284 556l10 18M320 592l20 14 8-4M342 604l8 22 12 14M380 646l2 2M410 669v1M424 675v1M442 684l14 3M470 704l30-6 16 16 30 6 4-14M516 718l32 8M566 716l8 14 10 10M596 732l40 6 20 10 20 12 20-6M656 740l30 22 20-10 12 22M640 770l2 10M710 790l14 10 -6 20M808 812v4M822 846v2M588 496v2M579 536v2M862 832l14 8 10-14M900 826l36 0M940 790l24-6v14M1016 240v40l16 12M1212 184h6M900 240v6M1090 745l30-30 16 30-50 40 10-30M1120 730l24 50M1310 980l20 60-30-20-12 60 24-20 20-50 8 60-20 40-30 20 10 30 40-40 8 50-20 30-20-20-8 40 12 50 10-40 14 40 6-60 10 60 8-80M1318 1050l24 40M1300 1170l0 60M1350 1120l-12 120 18-20 4-40M1290 1100l16-50M830 640l10 20M792 608l20 10M990 756l20 6 40-4 30 14M740 778h30l40-6M840 770l70-12M946 710l4 24M975 757v1M722 800l2 20"/>
        <path class="ct" d="M1005 165L1020 168 1052 205 1070 215 1150 308 1200 345 1302 427 1312 408 1393 459M1150 308l-3 18 3 22-10 26-12-7-8 5-8-6-8 6-10-22-12 3-10-16-12 8-18-9-10-6-8 14-12 4-12 22-14 10-10 20-6 22-20-2-22 18-10 10-16 28-3 14 3 14 24 18 20 10 78 65 22 2M960 235l-8 48 62 62M800 455l25-5 30 18 20 18 30 5M912 395l5 20 10 12M1060 572l20-20 0-18 10-5 6 8 14-9 14 6 18-2 58 46-8 42-12-8-10-2-28-18-60-10zM1060 572l-62 120-26 0 30-35 14-35 38 32v20M1185 545l10-25 20 12 14 8 18 2-3 12 10 14 22 12-4 18-30-8-28-6-15-22M1270 605l20-10 20-2 20-4 12 2M1195 625l-10 60-28-2-18 42M1190 645l60 40-6 20 10 14 4 40 6 12M815 605l20-10 18-10 20-18 30-10 30 22 72 62M953 605l-28 52-36 5-10 20M1088 682l50 38 45 40 10 30 18 25 36 22M890 742l40 8 6-30 12-10M735 765l12-20"/>
      </g>
      <path class="blob" d="M1001 1255l5 4M1011 1262v1M1027 1283l4 9M1031 1298l12 6M1036 1310l8 8"/><path class="st" d="M1026 1338l8-9 13 10-3 10-16-1z"/>
      <path class="blob" d="M2533 1614v1M2542 1606l14-7 8 1 8-4M2546 1603l20-3-14 8M2582 1592l6 1M2578 1602v1"/>
    </svg>

    <section class="right">
      <div class="dockhead big"><span>Layer Styling</span><svg><use href="#float"/></svg><svg><use href="#close"/></svg></div>
      <div class="btn layercombo"><svg><use href="#polyw"/></svg><span>us-counties-optimized</span><s class="dk"></s></div>
      <div class="stylebody">
        <nav class="tabsv"><span class="cur"><svg class="a"><use href="#brush"/></svg></span><span class="tagbig yellow"><svg><use href="#tag"/></svg><b>abc</b></span><span class="abc">abc</span><svg class="b"><use href="#cube"/></svg><svg class="c"><use href="#mesh2"/></svg><svg class="d"><use href="#brushes"/></svg><svg class="e"><use href="#hist"/></svg></nav>
        <div class="form">
          <div class="scrollarea">
            <div class="btn single"><span>gle Symbol</span></div>
            <div class="symrow">
              <i class="preview"></i>
              <div class="symtree"><div class="row"><i class="d"></i><i class="sw"></i><b>Fill</b></div><div class="row sel second"><i class="sw"></i><span>Simple Fill</span></div></div>
              <div class="symbtns"><span class="btn"><svg viewBox="0 0 28 28"><path d="M10 1h8v9h9v8h-9v9h-8v-9H1v-8h9z" fill="#4f8d56"/><path d="M12 3h4v9h9v4h-9v9h-4v-9H3v-4h9z" fill="none" stroke="#fff" stroke-width="2"/></svg></span><span class="btn"><svg viewBox="0 0 28 28"><rect x="1" y="10" width="26" height="9" fill="#605858" stroke="#777" stroke-width="2"/></svg></span><span class="btn"><svg viewBox="0 0 28 28"><path d="M1 5h22v22H1z" fill="#8b8d88"/><path d="M5 1h22v22H5z" fill="#eee" stroke="#999"/><use href="#star" x="16" y="16" width="12" height="12"/></svg></span></div>
            </div>
            <div class="line"></div>
            <div class="frow f0"><label class="w186">Symbol layer type</label><div class="btn typecombo"><span>Simple Fill</span></div></div>
            <div class="frow f1"><label class="w40">Fill color</label><div class="btn colorbtn"><i class="light"></i></div><div class="btn mini"><s></s></div></div>
            <div class="frow f2"><label class="w36">Fill style</label><div class="btn wide"><i class="solid"></i><span>Solid</span><s class="dk"></s></div></div>
            <div class="frow f3"><label class="w104">Stroke color</label><div class="btn colorbtn"><i class="dark"></i></div><div class="btn mini"><s></s></div></div>
            <div class="frow f4"><label class="w110">Stroke width</label><div class="spin wspin"><span class="cutl">0.260000</span><svg viewBox="0 0 26 22"><path d="M0 11L7 0h19v22H7z" fill="#999"/><path d="M10 5l10 12M20 5L10 17" stroke="#fff" stroke-width="2.500"/></svg><em class="updn"></em></div><div class="btn unit"><span>Millimeters</span><s class="dk"></s></div></div>
            <div class="frow f5"><label class="w97">Stroke style</label><div class="btn wide"><i class="stroke"></i><span>Solid Line</span><s class="dk"></s></div></div>
            <div class="frow f6"><label class="w60">Join style</label><div class="btn wide"><svg><use href="#bevel"/></svg><span>Bevel</span><s class="dk"></s></div></div>
            <div class="frow f7"><label class="w110">x</label><div class="spin wspin"><span class="zero">0.000000</span><em class="updn"></em></div></div>
          </div>
          <div class="hs1"><i></i></div>
          <h3><span>Layer Rendering</span></h3>
          <div class="frow g1"><label class="w18">Opacity</label><div class="slider"><i></i><b></b></div><div class="spin pct"><span>100.0 %</span></div></div>
          <div class="frow g2"><label class="w135">Blending mode</label><div class="col c1"><span>Layer</span><div class="btn"><span>Normal</span><s class="dk"></s></div></div><div class="col c2"><span>Feature</span><div class="btn"><span>Normal</span></div></div></div>
          <div class="frow g3"><label class="w138">Draw effects</label></div>
          <div class="frow g4"><label class="w428">Control feature rendering order</label></div>
          <div class="hs2"><i class="sb lf"></i><i class="thumb"></i><i class="sb rt"></i></div>
          <div class="applyrow"><span class="btn ub"><svg class="orange"><use href="#undo"/></svg></span><span class="btn ub"><svg class="greenu flip"><use href="#undo"/></svg></span><svg class="ck"><use href="#check"/></svg><span class="live">Live update</span><span class="btn apply">Apply</span></div>
        </div>
      </div>
      <div class="docktabs"><span class="cur">Layer Styling</span><span>Processing Toolbox</span></div>
    </section>
  </div>

  <footer>
    <div class="locator"><svg viewBox="0 0 28 28"><circle cx="12" cy="11" r="8.500" fill="none" stroke="#bbb" stroke-width="2.200"/><path d="M18 17l7 8" stroke="#bbb" stroke-width="2.600"/></svg><span>Type to locate (⌘K)</span></div>
    <span class="lab coord">Coordinate</span><div class="spin coordbox"><span>5271791,-2726012</span></div>
    <svg class="mouse" viewBox="0 0 30 34"><path d="M3 4l8-2 8 20-6 4z" fill="#fff" stroke="#000" stroke-width="2.500"/><circle cx="18" cy="22" r="8" fill="#ddd" stroke="#000" stroke-width="3"/><circle cx="18" cy="22" r="2" fill="#000"/></svg>
    <span class="lab scale">Scale</span><div class="spin scalebox"><span>1:33449536</span><em><s class="dk"></s></em></div>
    <svg class="lock" viewBox="0 0 24 32"><path d="M6 16V9q0-7 6-7t6 7v7" fill="none" stroke="#cfcfcf" stroke-width="3.500"/><rect x="1" y="15" width="22" height="16" rx="2" fill="#6e6e6e"/></svg>
    <span class="lab magn">Magnifier</span><div class="spin magbox"><span>100%</span><em class="updn"></em></div>
    <span class="lab rot">Rotation</span><div class="spin rotbox"><span>0.0 °</span><em class="updn"></em></div>
    <svg class="ck"><use href="#check"/></svg><span class="lab rend">Render</span>
    <svg class="wire" viewBox="0 0 30 28"><path d="M8 0h14l8 15-8 12H8L0 15z" fill="#777"/><path d="M1 12h28M3 20h24M15 0v28M8 2q-5 12 0 24M22 2q5 12 0 24M4 6h22" fill="none" stroke="#e8e8e8" stroke-width="1.600"/></svg>
    <span class="lab epsg">ESRI:102008</span>
    <svg class="msg" viewBox="0 0 34 30"><ellipse cx="16" cy="13" rx="16" ry="12.500" fill="#8c8c8c"/><path d="M20 22l9 8-1-12z" fill="#8c8c8c"/><path d="M6 13h4M14 13h4M22 13h4" stroke="#fff" stroke-width="3.500"/></svg>
    <svg class="grip" viewBox="0 0 24 24"><path d="M20 2h3M14 8h3M20 8h3M8 14h3M14 14h3M20 14h3M2 20h3M8 20h3M14 20h3M20 20h3" stroke="#8a8a8a" stroke-width="3.500"/></svg>
  </footer>
</main>

<div class="menu">
  <div class="it"><svg viewBox="4 0 40 48"><use href="#file" width="48" height="48"/></svg><span>New</span><kbd>⌘<b>N</b></kbd></div>
  <div class="it"><span>New from Template</span><svg class="cv"><use href="#chev"/></svg></div>
  <hr>
  <div class="it"><svg viewBox="0 3 48 44"><use href="#open" width="48" height="48"/></svg><span>Open...</span><kbd>⌘<b>O</b></kbd></div>
  <div class="it"><span>Open From</span><svg class="cv"><use href="#chev"/></svg></div>
  <div class="it"><span>Open Recent</span><svg class="cv"><use href="#chev"/></svg></div>
  <hr>
  <div class="it hot"><span>Close</span></div>
  <hr>
  <div class="it"><svg><use href="#disk"/></svg><span>Save</span><kbd>⌘<b>S</b></kbd></div>
  <div class="it"><svg viewBox="0 0 30 32"><use href="#disk" width="30" height="32"/><rect x="17" y="18" width="13" height="13" rx="2" fill="#4f8d56"/><path d="M27 20l-6 9" stroke="#fff" stroke-width="2.500"/></svg><span>Save As...</span><kbd>⇧⌘<b>S</b></kbd></div>
  <div class="it"><span>Save To</span><svg class="cv"><use href="#chev"/></svg></div>
  <div class="it off"><span>Revert...</span></div>
  <hr>
  <div class="it"><svg><use href="#prop"/></svg><span>Properties...</span><kbd>⇧⌘<b>P</b></kbd></div>
  <div class="it"><span>Snapping Options...</span></div>
  <div class="it"><span>Import/Export</span><svg class="cv"><use href="#chev"/></svg></div>
  <hr>
  <div class="it"><svg><use href="#layoutp"/></svg><span>New Print Layout...</span><kbd>⌘<b>P</b></kbd></div>
  <div class="it"><svg><use href="#report"/></svg><span>New Report...</span></div>
  <div class="it"><svg><use href="#layman"/></svg><span>Layout Manager...</span></div>
  <div class="it"><span>Layouts</span><svg class="cv"><use href="#chev"/></svg></div>
  <hr>
  <div class="it"><span>Models</span><svg class="cv"><use href="#chev"/></svg></div>
</div>
<div class="callout"></div>
<script src="map.js"></script>
</body>
</html>
```
FILE: styles.css
```css
*{box-sizing:border-box}
body{margin:0;width:3746px;height:2096px;overflow:hidden;position:relative;font-family:Inter,"Noto Sans","DejaVu Sans",sans-serif;font-size:34px;line-height:1;color:#e0e0e0;letter-spacing:-.3px;white-space:nowrap;
background:linear-gradient(#e4d880 0 98px,#1d3d7c 98px 130px,#b8ad6b 130px 175px,#161614 176px) 0 0/8px 100% no-repeat,linear-gradient(90deg,#191b14,#34351f 45%,#1c1d15) }
.defs{position:absolute;width:0;height:0}
svg{display:block;flex:none}
u,s,em,i{text-decoration:none;font-style:normal;flex:none;display:block}
.g11{font:bold 19px Inter,sans-serif;text-anchor:middle;fill:#333;letter-spacing:-1px}
.gi{font:italic bold 38px "Liberation Serif",serif;fill:#fff;text-anchor:middle}
.gi2{font:italic bold 32px "Liberation Serif",serif;fill:#fff;text-anchor:middle}
.gq{font:32px "Liberation Serif",serif;fill:#fff;text-anchor:middle}

/* menu bar */
.menubar{height:48px;display:flex;align-items:center;background:linear-gradient(90deg,#6c90b6,#5f86b1 35%,#41699e 60%,#305f9b 85%,#2f5f9c);font-size:26px;font-weight:500;color:#f6f9fc;letter-spacing:-.4px}
.apple{width:24px;height:32px;margin-right:27px}
.menubar span,.m-qgis{padding:0 20.6px;line-height:47px;height:47px}
.m-qgis{padding:0;margin-right:-8px;font-weight:700;width:85px}
.menubar .on{background:#8aabcd;border-radius:8px;padding:0 28.500px;margin-right:-8px}
.status-icons{width:646px;height:48px;margin-left:auto}

/* window */
.window{margin:2px 0 0 6px;width:3740px;height:2040px;background:#313131;border-left:2px solid #505254;border-top:2px solid #6b6d6f;border-bottom:2px solid #5c5c5c;border-radius:20px 20px 10px 0;overflow:hidden;display:flex;flex-direction:column}
.titlebar{height:55px;flex:none;background:#373839;border-bottom:2px solid #060606;display:flex;align-items:center;position:relative}
.titlebar i{width:24px;height:24px;border-radius:50%;margin-right:16px}
.titlebar .red{background:#f0594e;margin-left:13px}.amber{background:#f6b042}.green{background:#4db748}
.titlebar b{position:absolute;left:0;right:5px;top:14px;text-align:center;font-size:26px;font-weight:600;color:#cfcfcf;letter-spacing:.1px}
.tb{flex:none;display:flex;align-items:center;background:linear-gradient(#353535,#303030);border-bottom:2px solid #808080;box-shadow:inset 0 -3px #282828}
.tb1{height:77px}.tb2{height:78px}.tb3{height:78px;border-bottom-width:4px}
.ic{width:48px;height:48px;margin:0 9px}
.h{width:32px;height:36px;background:linear-gradient(90deg,transparent 17px,#888 17px 21px,transparent 21px 23px,#888 23px 27px,transparent 27px);-webkit-mask:repeating-linear-gradient(#000 0 4px,transparent 4px 6px);mask:repeating-linear-gradient(#000 0 4px,transparent 4px 6px)}
.tb1 .h{width:30.500px}
.tb>.h:first-child{width:23px;background-position:-10px 0}
.under{width:427px;display:flex;justify-content:flex-end}
.tb2 .under{width:426px;padding:42px 4px 0 0}
.tb3 .under{width:410px}
s{width:16px;height:9px;background:#c2c2c2;clip-path:polygon(0 0,100% 0,50% 100%)}
.tb>s{margin:4px 6px 0 3px}
.tb2>s{margin-right:5px}
.dk{background:#151515}
.withdn{display:flex;position:relative}
.withdn s{position:absolute;right:1px;bottom:2px}
.btn{display:flex;align-items:center;background:linear-gradient(#484848,#3a3a3a);border:2px solid #565656;border-radius:5px;box-shadow:0 0 0 2px #272727;color:#000}
.spin{display:flex;align-items:center;background:#1e1e1e;border-radius:4px;box-shadow:0 0 0 2px #2a2a2a;color:#dedede;overflow:hidden}
.updn{align-self:stretch;width:27px;margin-left:auto;border:2px solid #565656;background:#3f3f3f;border-radius:0 5px 5px 0;position:relative}
.updn:before,.updn:after{content:"";position:absolute;left:4px;width:16px;height:8px;background:#c2c2c2;clip-path:polygon(50% 0,100% 100%,0 100%);top:22%}
.updn:after{top:auto;bottom:22%;transform:scaleY(-1)}
.snapbtn{width:60px;height:58px;margin:0 8px 0 3px;position:relative}
.snapbtn svg{width:56px;height:54px}.snapbtn s{position:absolute;right:0;bottom:2px;width:13px}
.snapspin{width:240px;height:52px;padding-left:6px}.snapspin span{color:#6f6f6f;font-size:36px}
.snapunit{width:246px;height:58px;margin:0 1px 0 6px;padding:0 12px 0 8px;justify-content:space-between;color:#1c1c1c}
.snapunit s{background:#2a2a2a}
.vs{width:2px;height:38px;background:#292929;margin:0 6px}
.tb3 .vs{margin:0 5px}
.h3{margin-left:0}
.arc{width:52px;margin:0 0 0 4px}
.tagic{position:relative;width:66px;height:48px;display:block;flex:none}
.tagic svg{position:absolute;left:9px;top:0;width:48px;height:48px}
.tagic b{position:absolute;left:20px;top:11px;font-size:20px;line-height:22px;font-weight:600;letter-spacing:-1.4px;color:#222}
.pin{position:absolute;left:36px;bottom:3px;width:18px;height:18px;border-radius:50%;background:#b02024}
.pin:before{content:"";position:absolute;left:6px;top:-12px;width:5px;height:14px;background:#ddd;border-radius:3px}
.dot{position:absolute;left:37px;bottom:4px;width:14px;height:14px;border-radius:50%;border:4px solid #60666c;background:#222}
.tagic .sq{left:36px;top:26px;width:21px;height:21px;background:#4b4d4f;border-radius:3px}
.yellow{--a:#fbe55a;--b:#c7a42c}.blue{--a:#c7dffa;--b:#4c86cf}.redt{--a:#fcd4d2;--b:#ef3024}.redt b{color:#ef2a20}
.dim{--a:#55554d;--b:#474740}.dim b{color:#2c2c2c}.dim .pin{background:#5a4446}.dim .pin:before{background:#666}
.greyish{--a:#5e5855;--b:#4c4846}.orange{--a:#e8803e;--b:#b35a20}.greenu{--a:#82bd88;--b:#4e8255}
.flip{transform:scaleX(-1)}

/* panels */
.body{flex:1;display:flex;min-height:0}
.left{width:764px;flex:none;position:relative}
.left:after,.right:before{content:"";position:absolute;left:756px;top:826px;width:5px;height:36px;background:repeating-linear-gradient(#8a8a8a 0 4px,transparent 4px 6.400px)}
.right:before{left:8px}
.map{width:2195px;height:1675px;margin-top:2px;background:#fff;flex:none}
.right{flex:1;padding-left:21px;position:relative;min-width:0;overflow:hidden}
.dockhead{display:flex;align-items:center;height:46px;padding-top:4px}
.dockhead span{flex:1}
.dockhead svg{width:22px;height:22px;margin-right:7px;margin-top:-2px}
.left .dockhead{width:756px;padding-left:7px}
.left .dockhead svg:last-child{margin-right:9px}
.right .dockhead{padding-left:2px}
.right .dockhead svg:last-child{margin-right:-1px}
.small{font-size:22px;letter-spacing:.2px}
.browsertools{height:64px;display:flex;gap:22px;padding:15px 0 0 15px}
.browsertools svg{width:29px;height:30px}
.treewrap{display:flex;height:863px}
.tree{width:720px;background:#1e1e1e;overflow:hidden;border-top:1px solid #2a2a2a;letter-spacing:-.05px}
.row{height:48px;display:flex;align-items:center;position:relative}
.sel{background:#474747;color:#fff}
.l0{padding-left:6px}.l1{padding-left:38px}.l2{padding-left:70px}.l3{padding-left:102px}
.row>i{width:20px}
.row>.r{height:16px;width:9px;margin:0 5px 0 6px;background:#b4b4b4;clip-path:polygon(0 0,100% 50%,0 100%)}
.row>.d{height:9px;width:16px;margin:0 2px;background:#b4b4b4;clip-path:polygon(0 0,100% 0,50% 100%)}
.tree .row svg{width:28px;height:28px;margin:0 15px 0 14px}
.tree .row .st2{width:34px;height:34px;margin:0 12px 0 11px}
.uky{letter-spacing:.65px}
.tail{position:absolute;left:400px;text-align:right}
.t1{width:306px}.t2{width:308px}.t3{width:320px}.t4{width:269px}.t5{width:187px}
.vscroll{width:28px;background:#393939;display:flex;flex-direction:column;border:1px solid #2a2a2a;align-items:stretch}
.sb{position:relative;border:2px solid #565656;background:#3b3b3b;width:26px;height:26px;flex:none}
.sb:after{content:"";position:absolute;left:4px;top:6px;width:14px;height:9px;background:#c2c2c2;clip-path:polygon(50% 0,100% 100%,0 100%)}
.down:after{transform:scaleY(-1)}.lf:after{transform:rotate(-90deg)}.rt:after{transform:rotate(90deg)}
.thumb{border:2px solid #565656;background:#404040;border-radius:1px}
.vscroll .thumb{height:456px;margin-top:2px}.vscroll .down{margin-top:auto}
.hscroll{height:27px;width:720px;display:flex;background:#363636}
.hscroll .thumb{width:610px;margin-left:2px}.hscroll .rt{margin-left:auto}
.hsplit{height:14px;background:repeating-linear-gradient(90deg,#8a8a8a 0 4px,transparent 4px 6px) 360px 6px/36px 5px no-repeat}
.left .small{height:44px}
.layertools{height:64px;display:flex;align-items:center;padding-left:8px}
.layertools svg{width:28px;height:30px;margin-right:22px}
.active{width:44px;height:54px;border:2px solid #484848;border-radius:5px;background:#292929;display:flex;align-items:center;justify-content:center;margin-right:14px}
.active svg{margin:0;width:32px}
.lt{position:relative}.lt s{position:absolute;left:22px;bottom:-1px;width:12px;height:7px}
.wide{flex:none}
.layertools s.wide{margin:0 16px 0 -8px}
.layers{width:749px;height:555px;background:#1e1e1e;border-top:1px solid #2a2a2a;letter-spacing:.75px}
.layers .ck{margin:0 12px 0 46px}
.ck{width:27px;height:28px}
.row>.sw{width:31px;height:31px;background:#bbb;margin-right:13px}
.row>.none{background:#1c1c1c;outline:1px solid #262626}
.ul{border-bottom:3px solid #fff;height:39px;line-height:39px}

.layercombo{height:57px;width:753px;margin-top:7px;padding:0 12px 0 8px;letter-spacing:.15px}
.layercombo svg{width:32px;height:24px;margin-right:7px}
.layercombo span{flex:1}
.stylebody{display:flex;margin-top:28px;height:1470px}
.tabsv{width:76px;display:flex;flex-direction:column;align-items:flex-start;background:linear-gradient(#313131 50px,#434343 50px);position:relative}
.tabsv svg{margin-left:8px}
.tabsv .cur{height:50px;padding:2px 0 0 12px}
.tabsv .a{width:44px;height:36px;margin:0}
.tagbig{position:relative;width:60px;height:60px;margin:5px 0 0}
.tagbig svg{position:absolute;left:0;top:2px;width:52px;height:52px;margin-left:5px}
.tagbig b{position:absolute;left:18px;top:17px;font:18px "DejaVu Sans Mono",monospace;color:#111;letter-spacing:-1px}
.abc{margin:16px 0 0 8px;width:46px;height:26px;background:#e8eefc;border-radius:12px;color:#333;font-size:24px;font-weight:600;text-align:center;line-height:24px}
.tabsv .b{width:42px;height:46px;margin-top:32px}.tabsv .c{width:44px;height:32px;margin-top:24px}.tabsv .d{width:44px;height:46px;margin-top:27px}.tabsv .e{width:38px;height:40px;margin:21px 0 0 12px}
.form{margin-left:6px;width:674px;overflow:hidden;flex:none}
.scrollarea{height:935px;overflow:hidden}
.single{height:57px;border-left:0;border-radius:0;margin-right:-4px}
.single span{margin-left:-3px}
.symrow{display:flex;height:291px;margin-top:14px}
.preview{width:51px;height:119px;margin-top:86px;background:#bbb}
.symtree{width:509px;flex:none;margin-left:56px;background:#1e1e1e;border:1px solid #282828}
.symtree .d{margin:0 17px 0 13px}
.symtree .second{padding-left:86px}
.symbtns{margin:9px 0 0 16px;display:flex;flex-direction:column;gap:40px;flex:none}
.symbtns{gap:20px}
.symbtns .btn{width:56px;height:44px;padding-left:10px}
.symbtns svg{width:28px;height:28px}
.line{height:2px;background:#8c8c8c;margin-top:13px}
.frow{display:flex;align-items:center}
label{display:flex;justify-content:flex-end;overflow:hidden;flex:none;height:44px;align-items:center}
.w186{width:179px;margin-right:3px}.w40{width:40px;margin-right:87px}.w36{width:36px;margin-right:91px}.w104{width:104px;margin-right:23px}.w110{width:110px;margin-right:17px}.w97{width:97px;margin-right:30px}.w60{width:60px;margin-right:67px}
.f0{height:57px;margin-top:21px}.typecombo{height:57px;flex:1;margin-right:-5px;padding-left:6px}
.f1,.f3{height:52px}.f1{margin-top:28px}
.colorbtn{width:503px;height:52px;padding:0 6px}.colorbtn i{flex:1;height:32px;border-radius:6px}
.light{background:#bbb}.dark{background:#222}
.mini{width:20px;height:52px;margin-left:4px;justify-content:center}.mini s{width:15px}
.f2{margin-top:16px}.f3{margin-top:16px}
.btn.wide{width:527px;height:56px;padding:0 12px 0 8px}
.btn.wide span,.unit span{flex:1}
.solid{width:63px;height:32px;background:#636363;margin-right:7px}
.stroke{width:63px;height:4px;background:#000;margin-right:7px}
.btn.wide svg{width:28px;height:28px;margin-right:10px}
.f4{margin-top:16px;height:56px}.wspin{width:208px;height:53px;position:relative}
.cutl{width:115px;margin-left:4px;display:flex;justify-content:flex-end;overflow:hidden;height:40px;align-items:center;letter-spacing:0}
.wspin svg{width:26px;height:22px;margin-left:12px}
.zero{margin-left:9px}
.unit{width:304px;height:56px;margin-left:16px;padding:0 12px 0 8px}
.f5{margin-top:16px}.f6{margin-top:16px}.f7{margin-top:17px}
.hs1{height:27px;background:#363636}.hs1 i{width:661px;height:27px;border:2px solid #565656;border-left:0;background:#404040}
h3{margin:0;height:76px;border-bottom:2px solid #3f3f3f;font-size:34px;display:flex;align-items:center;padding-top:23px;overflow:hidden;width:674px}
h3 span{width:211px;display:flex;justify-content:flex-end;overflow:hidden;height:44px;align-items:center;flex:none}
.w18{width:18px;margin-right:134px}.w135{width:135px;margin-right:14px}.w138{width:138px}.w428{width:428px}
.g1{margin-top:22px;height:53px}
.slider{width:380px;display:flex;align-items:center}.slider i{width:356px;height:7px;background:#62a6f4;box-shadow:0 0 0 2px #262626}
.slider b{width:22px;height:24px;background:#454545;border:2px solid #5c5c5c;border-radius:4px;box-shadow:0 0 0 2px #262626}
.pct{height:53px;width:200px;margin-left:12px;padding-left:9px;flex:none}
.g2{height:102px;margin-top:17px}.g2 label{margin-top:4px}
.col{display:flex;flex-direction:column;justify-content:space-between;height:100%;flex:none;padding-top:5px}
.col .btn{height:56px;width:291px;padding:0 12px 0 8px}.col .btn span{flex:1}.c2{margin-left:6px}
.g3{height:44px;margin-top:9px}.g4{height:44px;margin-top:12px}
.hs2{height:27px;display:flex;background:#373737;margin-top:28px}
.hs2 .thumb{width:481px;margin-left:81px}.hs2 .rt{margin-left:auto}
.applyrow{display:flex;align-items:center;height:58px;margin-top:14px;padding-left:1px}
.ub{width:45px;height:42px;margin-right:15px;justify-content:center}.ub svg{width:34px;height:34px}
.applyrow .ck{margin-left:142px}.live{margin-left:12px;width:186px;letter-spacing:0}
.apply{width:156px;height:56px;margin-left:28px;justify-content:center}
.docktabs{display:flex;align-items:flex-start;margin:8px 0 0 -4px;border-top:2px solid #282828}
.docktabs span{height:56px;line-height:54px;border:2px solid #4b4b4b;border-top:0;border-radius:0 0 6px 6px;padding:0 0 0 20px;background:#2b2b2b;width:362px;box-shadow:0 1px 0 2px #272727;letter-spacing:0}
.docktabs .cur{width:257px;margin-right:3px;height:60px;line-height:60px;background:#313131}

/* status bar */
footer{height:71px;display:flex;align-items:center;padding-top:3px;font-size:24px;flex:none;background:#303030;letter-spacing:0;position:relative}
.locator{width:432px;height:55px;margin-left:2px;background:#202020;border-radius:4px;display:flex;align-items:center;font-size:34px;color:#b2b2b2;letter-spacing:.1px}
.locator svg{width:28px;height:28px;margin:0 14px 0 18px}
.lab{flex:none;letter-spacing:-.55px}.coord{width:115px;margin-left:1466px;letter-spacing:-.75px}
.coordbox{width:227px;height:42px;margin-left:8px;padding-left:13px;letter-spacing:-.3px}
.mouse{width:30px;height:34px;margin-left:10px}.scale{margin-left:27px;width:58px}
.scalebox{width:224px;height:57px;margin-left:8px;padding-left:7px}.scalebox em{margin-left:auto;align-self:stretch;width:39px;border:2px solid #565656;background:#3e3e3e;display:flex;align-items:center;justify-content:center;border-radius:0 5px 5px 0}
.lock{width:24px;height:32px;margin-left:26px}.magn{margin-left:18px;width:99px;letter-spacing:-.8px}
.magbox{width:182px;height:43px;margin-left:8px;padding-left:8px}
.magbox,.rotbox,.scalebox{font-size:24.500px}
.rot{margin-left:20px;width:87px;letter-spacing:-.8px}.rotbox{width:183px;height:51px;margin-left:20px;padding-left:9px;font-size:26px}
footer .ck{margin-left:14px}.rend{margin-left:11px;width:76px}
.wire{width:31px;height:28px;margin-left:30px}.epsg{margin-left:5px;color:#060606;width:133px;font-weight:500;letter-spacing:-1px}
.msg{width:34px;height:30px;margin-left:45px}
.grip{position:absolute;right:0;bottom:0;width:24px;height:24px}

/* map */
.st{fill:#bbb;stroke:#232323;stroke-width:4;stroke-linejoin:round;vector-effect:non-scaling-stroke}
.bd{fill:none;stroke:#232323;stroke-width:3.200;stroke-linejoin:round;vector-effect:non-scaling-stroke}
.ct{fill:none;stroke:#232323;stroke-width:1.500;vector-effect:non-scaling-stroke}
.blob{fill:none;stroke:#232323;stroke-width:6;stroke-linecap:round;stroke-linejoin:round;vector-effect:non-scaling-stroke}

/* dropped-down Project menu */
.menu{position:absolute;left:128px;top:50px;width:446px;height:944px;border-radius:12px;border:2px solid #55585a;padding:9px 8px;background:linear-gradient(#353633,#33383b 18%,#2b2d30 48%,#343537 62%,#3b3c3e 75%,#303133 95%);box-shadow:0 0 0 1px #0b0b0b,0 14px 40px rgba(0,0,0,.55);font-size:26px;color:#ececec;letter-spacing:-.3px}
.it{height:44px;display:flex;align-items:center;padding:0 19px 0 18px;border-radius:8px}
.it>svg{width:31px;height:32px;margin-right:13px}
.it .cv{margin:0 0 0 auto;width:14px;height:20px}
.hot{background:#1d57bd}
.off,.menu kbd{color:#707274}
.menu kbd{margin-left:auto;font:25px Inter,"DejaVu Sans",sans-serif;letter-spacing:2px}
.menu kbd b{font-weight:400;display:inline-block;min-width:20px;text-align:right;letter-spacing:0}
.menu hr{margin:9px 19px 11px;border:0;height:2px;background:#55585a}
.callout{position:absolute;left:129px;top:574px;width:454px;height:75px;border:10.500px solid #d0341a}
```
FILE: map.js
```js
// Each state: outline points, then county width, county height and irregularity.
const states = [
  ["148,97 152,115 185,125 180,180 195,150 195,82 260,108 325,130 303,293 265,285 230,278 195,282 165,272 155,235 140,225 148,180", 34, 36, .5],
  ["140,225 155,235 165,272 195,282 230,278 265,285 303,293 308,320 278,380 283,395 268,512 90,452 85,400 115,330", 36, 48, .5],
  ["90,452 190,490 165,650 272,905 275,960 262,1040 180,1028 178,985 155,940 140,930 125,900 100,885 98,820 82,760 85,700 68,620 72,580 62,530 75,500", 30, 42, .55],
  ["190,490 340,540 303,812 298,860 278,855 272,905 165,650", 62, 110, .4],
  ["325,130 345,136 340,190 370,270 358,330 370,350 385,405 430,410 412,555 340,540 268,512 283,395 278,380 308,320 303,293", 30, 42, .5],
  ["345,136 480,172 620,197 605,418 435,390 430,410 385,405 370,350 358,330 370,270 340,190", 37, 48, .5],
  ["435,390 605,418 595,640 412,610", 46, 62, .3],
  ["340,540 412,555 412,610 460,620 440,845 303,812", 52, 46, .3],
  ["460,620 645,645 635,870 440,845", 28, 34, .4],
  ["303,812 440,845 412,1155 350,1140 248,1048 262,1040 275,960 272,905 278,855 298,860", 56, 90, .4],
  ["440,845 612,870 590,1142 487,1130 487,1140 437,1138 437,1158 412,1155", 40, 50, .35],
  ["620,197 778,206 790,290 790,375 610,367", 22, 30, .25],
  ["610,367 790,375 795,515 795,560 760,548 715,540 602,532", 22, 28, .25],
  ["602,532 715,540 760,548 795,560 805,620 830,710 645,703 645,645 597,640", 21, 25, .2],
  ["645,703 830,710 843,750 845,878 635,870", 18, 23, .1],
  ["612,870 845,878 850,1060 820,1048 800,1055 770,1055 750,1045 710,1030 690,1010 690,900 610,897", 20, 29, .35],
  ["610,897 690,900 690,1010 710,1030 750,1045 770,1055 800,1055 820,1048 862,1070 865,1140 878,1180 872,1272 835,1310 790,1350 765,1390 755,1430 767,1490 740,1475 705,1460 690,1400 675,1360 660,1310 640,1275 600,1265 580,1308 545,1280 530,1210 487,1140 590,1142", 19, 26, .2],
  ["778,206 822,206 827,185 835,222 885,230 895,240 920,250 950,253 915,285 895,330 882,390 885,440 925,485 927,512 795,515 790,375 790,290", 22, 28, .3],
  ["795,515 927,512 945,560 955,600 930,640 930,675 812,678 795,560", 14, 19, .08],
  ["812,678 930,675 930,700 960,770 985,830 995,862 985,890 970,905 847,905 845,878 843,750 830,710", 17, 24, .3],
  ["847,905 970,905 985,910 965,1010 948,1070 945,1098 862,1098 862,1070 850,1060", 18, 24, .35],
  ["862,1098 945,1098 948,1140 935,1208 995,1205 1005,1245 995,1265 1020,1300 990,1290 975,1305 930,1285 872,1272 878,1180 865,1140", 18, 24, .45],
  ["895,330 905,318 945,345 1010,370 1020,400 1012,480 1010,560 947,562 927,512 925,485 885,440 882,390", 17, 24, .25],
  ["915,325 955,310 995,285 985,320 1020,330 1065,312 1068,322 1090,322 1105,348 1060,350 1020,380 1010,370 945,345", 18, 26, .3],
  ["1050,400 1065,385 1075,360 1115,385 1118,435 1105,470 1130,455 1148,510 1130,585 1055,592 1050,540 1042,460", 15, 22, .1],
  ["947,562 1015,560 1027,605 1033,770 1020,830 1000,862 985,830 960,770 930,700 930,640 955,600", 15, 21, .3],
  ["1027,605 1055,598 1097,596 1107,745 1085,790 1030,820 1033,770", 13, 19, .2],
  ["1097,596 1130,585 1160,598 1205,560 1215,655 1185,710 1175,755 1145,755 1107,745", 14, 19, .25],
  ["1020,830 1030,820 1085,790 1107,745 1145,755 1175,755 1195,820 1165,862 995,890 1000,862", 10, 14, .6],
  ["995,890 1165,862 1225,855 1185,905 1145,960 975,980 985,910", 12, 18, .5],
  ["975,980 1030,975 1035,1235 1005,1240 995,1205 935,1208 948,1140 945,1098 948,1070 965,1010", 14, 21, .3],
  ["1030,975 1107,967 1130,1130 1140,1185 1060,1192 1070,1230 1045,1238 1035,1235", 15, 22, .35],
  ["1107,967 1180,960 1175,975 1215,1035 1255,1100 1245,1175 1225,1192 1140,1195 1130,1130", 10, 14, .6],
  ["1060,1192 1140,1185 1140,1195 1225,1192 1240,1180 1260,1240 1290,1310 1315,1380 1315,1460 1295,1475 1270,1440 1245,1400 1225,1340 1220,1270 1170,1225 1145,1258 1110,1228 1070,1230", 17, 26, .35],
  ["1180,960 1190,945 1220,935 1275,945 1312,985 1295,1040 1255,1100 1215,1035 1175,975", 15, 21, .5],
  ["1225,855 1360,820 1385,870 1375,925 1340,950 1312,985 1275,945 1220,935 1190,945 1145,960 1185,905", 12, 19, .5],
  ["1165,862 1195,820 1240,800 1260,730 1285,685 1310,690 1345,770 1360,820 1225,855", 10, 14, .6],
  ["1175,755 1185,710 1215,655 1218,678 1245,672 1285,685 1260,730 1240,800 1205,820 1195,820", 11, 17, .6],
  ["1245,672 1345,648 1372,700 1360,780 1345,770 1310,690 1285,685", 12, 17, .6],
  ["1205,560 1222,545 1340,518 1370,560 1362,620 1345,648 1218,678 1215,655", 14, 20, .5],
  ["1350,545 1385,560 1388,620 1365,690 1345,648 1362,620 1370,560", 12, 18, .5],
  ["1222,545 1240,510 1232,465 1290,460 1297,400 1315,355 1358,340 1375,440 1385,490 1385,560 1425,540 1390,578 1370,560 1340,518", 18, 26, .4],
  ["1358,340 1402,320 1420,360 1440,410 1440,440 1380,455", 15, 26, .5],
  ["1380,455 1440,435 1465,480 1440,510 1385,550 1385,490", 15, 22, .4],
  ["1402,320 1420,260 1430,165 1445,172 1455,165 1485,250 1510,285 1480,330 1440,400 1440,410 1420,360", 24, 46, .4]
];
const islands = "M190,82v0M190,105l0,20M188,115l-2,60M182,140l-2,40M105,912l15,8M118,965v1M148,963l4,8M142,990l4,6M965,260l14-18M1465,465l8,20M1460,505v1M1475,505v1M1395,575l35-35M1012,1290l5,18M1025,1255v1M1265,1510v1M1275,1503l6-2M1296,1496v1M1480,335l6-12M1355,870l20,-20-10,40 -10,30M1350,780l10-60-12,-40M1335,690l6,60M1045,1225v8M1222,1340l2,10M1245,1395l6,14M835,1290l6,10M925,1282l12,4M1360,830l8,40M1010,430l10-40M1052,410l4-10M1085,348l18,0M1075,365l-25,0-20,10M1056,375v1M755,1400l10-30 30-25";
const svgNS = "http://www.w3.org/2000/svg";
const root = document.getElementById("usa");
let seed = 7;
const rnd = () => (seed = (seed * 16807) % 2147483647) / 2147483647 - .5;
const add = (tag, attrs, parent) => {
  const n = document.createElementNS(svgNS, tag);
  for (const k in attrs) n.setAttribute(k, attrs[k]);
  return parent.appendChild(n);
};
const outline = "M" + states.map(s => s[0].replace(/ /g, "L") + "z").join("M");
add("path", { d: outline, class: "st" }, root);
states.forEach(([pts, w, h, j], i) => {
  const p = pts.split(" ").map(q => q.split(",").map(Number));
  const xs = p.map(q => q[0]), ys = p.map(q => q[1]);
  const x0 = Math.min(...xs), x1 = Math.max(...xs), y0 = Math.min(...ys), y1 = Math.max(...ys);
  const cp = add("clipPath", { id: "c" + i }, root);
  add("polygon", { points: pts }, cp);
  const cx = (x0 + x1) / 2;
  // Parallels slope down towards the central meridian and rise east of it.
  const tilt = (870 - cx) / 870 * .2;
  const cols = Math.ceil((x1 - x0) / w) + 2, rows = Math.ceil((y1 - y0) / h) + 4;
  const grid = [];
  for (let r = -2; r <= rows; r++) {
    const line = [];
    for (let c = -1; c <= cols; c++) {
      const bx = x0 + c * w + rnd() * w * j * 1.1, by = y0 + r * h + rnd() * h * j * 1.2;
      line.push([bx - (by - y0) * tilt * .35, by + (bx - cx) * tilt]);
    }
    grid.push(line);
  }
  const f = q => q[0].toFixed(1) + " " + q[1].toFixed(1);
  let d = "";
  for (let r = 0; r < grid.length - 1; r++) {
    for (let c = 0; c < grid[r].length - 1; c++) {
      const a = grid[r][c], b = grid[r][c + 1], e = grid[r + 1][c];
      if (rnd() > -.5 + j * .16) {
        const m = [(a[0] + b[0]) / 2 + rnd() * w * j * .3, (a[1] + b[1]) / 2 + rnd() * h * j * .5];
        d += "M" + f(a) + "L" + f(m) + "L" + f(b);
      }
      const s = j > .15 && rnd() > .1 ? w * .4 * Math.sign(rnd()) : 0;
      const g = [a[0] + s, a[1] + (b[1] - a[1]) * s / w], k = [e[0] + s, e[1]];
      const m = [(g[0] + k[0]) / 2 + rnd() * w * j * .5, (g[1] + k[1]) / 2 + rnd() * h * j * .3];
      d += "M" + f(g) + "L" + f(m) + "L" + f(k);
    }
  }
  add("path", { d, class: "ct", "clip-path": `url(#c${i})` }, root);
});
add("path", { d: outline, class: "bd" }, root);
add("path", { d: islands, class: "blob" }, root);
```
